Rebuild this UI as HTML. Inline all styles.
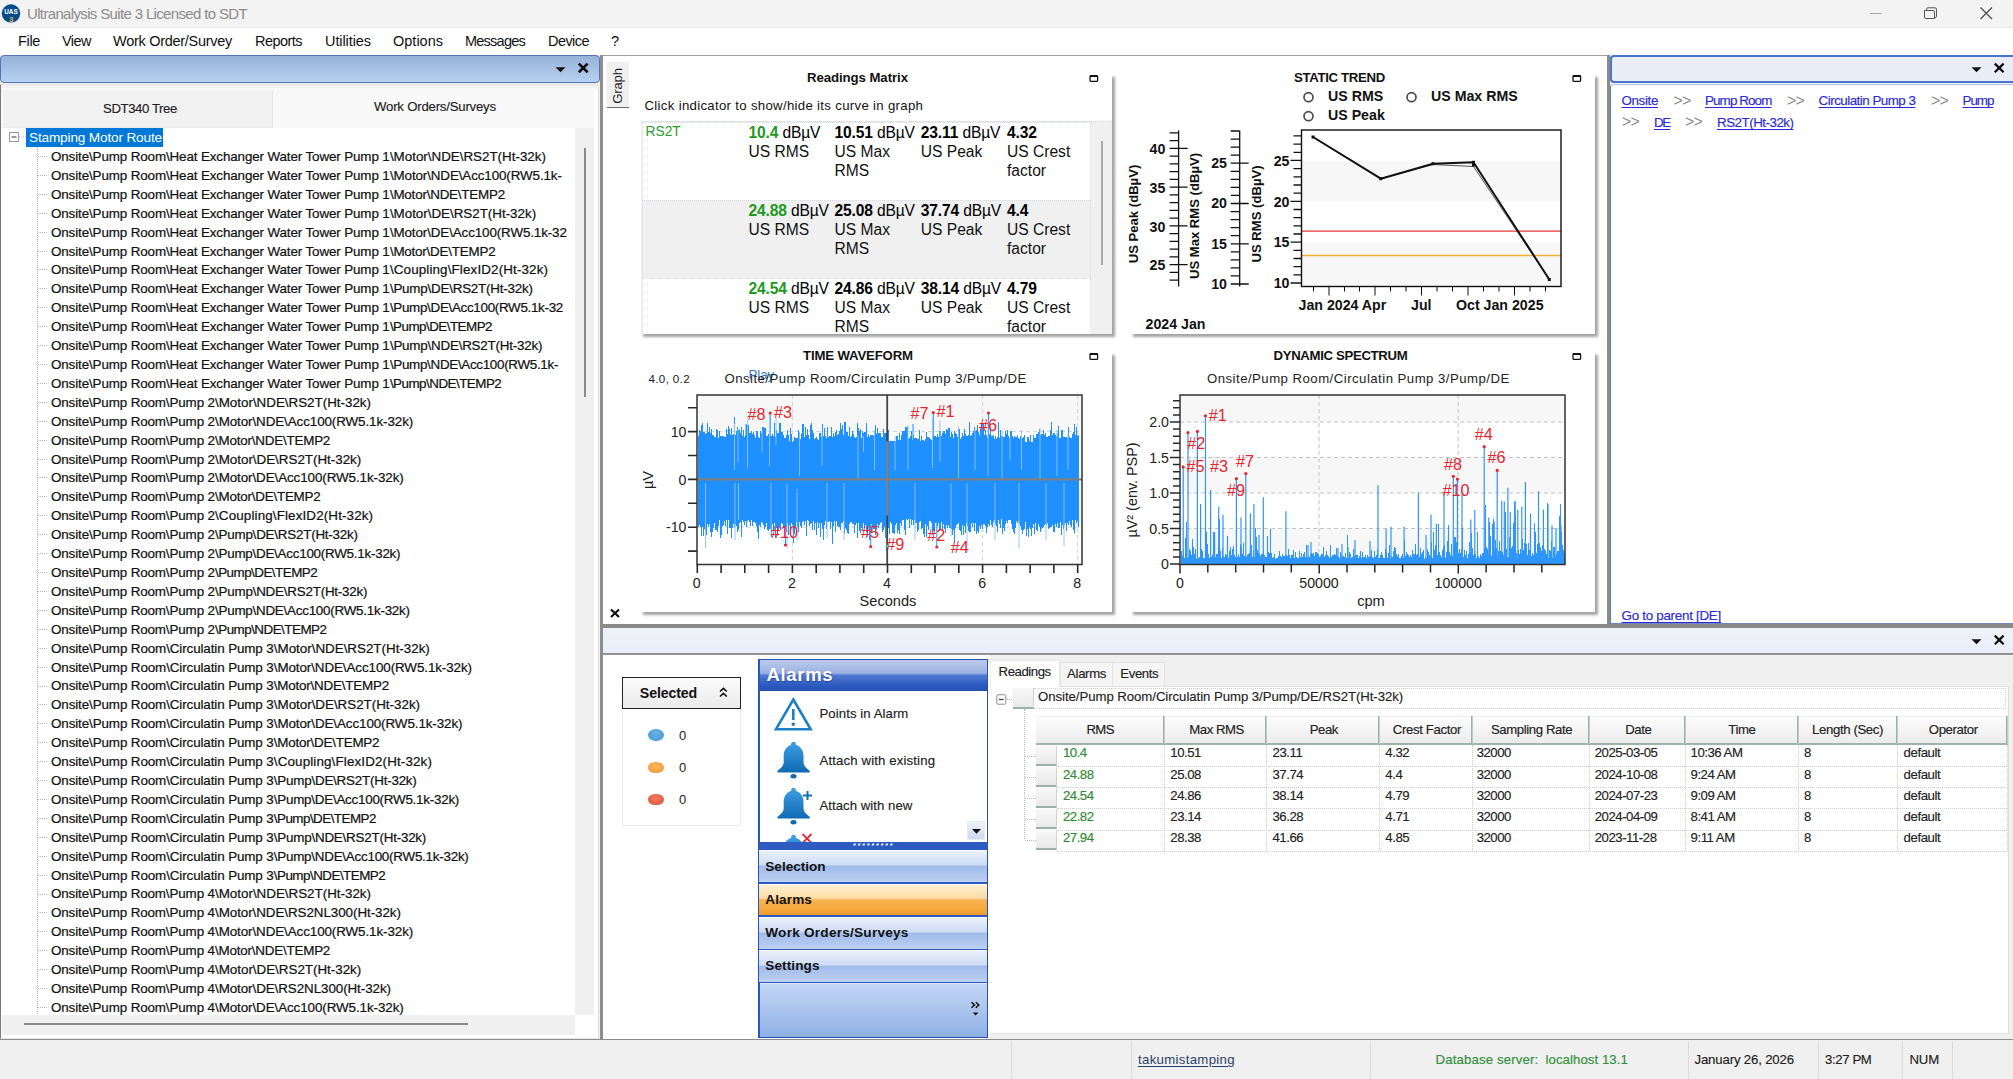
<!DOCTYPE html>
<html><head><meta charset="utf-8"><title>Ultranalysis Suite 3</title><style>
html,body{margin:0;padding:0;background:#f0f0f0;overflow:hidden}
body{width:2013px;height:1079px;position:relative;font-family:"Liberation Sans",sans-serif;color:#000}
.t{position:absolute;white-space:pre;line-height:1}
.r{position:absolute;box-sizing:border-box}
svg{overflow:visible}
.tr{-webkit-text-stroke-width:0.22px}
.ts{-webkit-text-stroke-width:0.15px}
</style></head><body>
<!-- p1_frame -->
<div class="r" style="left:0.00px;top:0.00px;width:2013.00px;height:28.00px;background:#f3f3f3;border-bottom:1px solid #e9e9e9"></div>
<svg class="r" style="left:0;top:0" width="24" height="28" viewBox="0 0 24 28"><circle cx="11" cy="13.4" r="9.9" fill="#e4edf6"/><circle cx="11" cy="13.4" r="9.2" fill="#064c8c"/><text x="11" y="14.3" font-family="Liberation Sans" font-weight="bold" font-size="7.6" fill="#fff" text-anchor="middle" textLength="13.6" lengthAdjust="spacingAndGlyphs">UAS</text><text x="11.3" y="22" font-family="Liberation Sans" font-weight="bold" font-size="8" fill="#d9b84a" text-anchor="middle">3</text></svg>
<span class="t " style="left:27.00px;top:5.90px;font-size:15.00px;letter-spacing:-0.651px;color:#8b8b8b;">Ultranalysis Suite 3 Licensed to SDT</span>
<svg class="r" style="left:1860px;top:0" width="153" height="28" viewBox="0 0 153 28"><path d="M10 13.5H21.5" stroke="#a8a8a8" stroke-width="1" fill="none"/><path d="M64.5 10.5h8.5a1.5 1.5 0 0 1 1.5 1.5v6.5h-8.5a1.5 1.5 0 0 1-1.5-1.5z M66.5 10.3v-1a1.5 1.5 0 0 1 1.5-1.5h7a1.5 1.5 0 0 1 1.5 1.5v7a1.5 1.5 0 0 1-1.5 1.5h-.5" stroke="#555" stroke-width="1" fill="none"/><path d="M120.5 7.5L132 19 M132 7.5L120.5 19" stroke="#444" stroke-width="1.1" fill="none"/></svg>
<div class="r" style="left:0.00px;top:28.00px;width:2013.00px;height:27.00px;background:#fff;"></div>
<span class="t " style="left:18.00px;top:34.03px;font-size:14.50px;letter-spacing:-0.341px;color:#111;">File</span>
<span class="t " style="left:62.00px;top:34.03px;font-size:14.50px;letter-spacing:-0.542px;color:#111;">View</span>
<span class="t " style="left:113.00px;top:34.03px;font-size:14.50px;letter-spacing:-0.284px;color:#111;">Work Order/Survey</span>
<span class="t " style="left:255.00px;top:34.03px;font-size:14.50px;letter-spacing:-0.539px;color:#111;">Reports</span>
<span class="t " style="left:325.00px;top:34.03px;font-size:14.50px;letter-spacing:-0.081px;color:#111;">Utilities</span>
<span class="t " style="left:393.00px;top:34.03px;font-size:14.50px;letter-spacing:0.004px;color:#111;">Options</span>
<span class="t " style="left:465.00px;top:34.03px;font-size:14.50px;letter-spacing:-0.761px;color:#111;">Messages</span>
<span class="t " style="left:548.00px;top:34.03px;font-size:14.50px;letter-spacing:-0.554px;color:#111;">Device</span>
<span class="t " style="left:611.00px;top:34.03px;font-size:14.50px;color:#111;">?</span>
<div class="r" style="left:0.00px;top:55.00px;width:2013.00px;height:985.00px;background:#f0f0f0;"></div>
<div class="r" style="left:0.00px;top:55.00px;width:599.50px;height:28.00px;background:linear-gradient(#98b3d8,#a7c1e3 50%,#b7d1f1);border:1.6px solid #5572b4;border-left-width:1px;border-radius:4px;box-sizing:border-box;"></div>
<svg class="r" style="left:550px;top:60px" width="45" height="18" viewBox="0 0 45 18"><path d="M5.5 7.3h10l-5 5z" fill="#111"/><path d="M28.8 3.6L37.6 12.2 M37.6 3.6L28.8 12.2" stroke="#111" stroke-width="2.7" fill="none"/></svg>
<div class="r" style="left:0.00px;top:84.00px;width:599.00px;height:955.00px;background:#fff;border:1px solid #e4e4e4;border-left:1px solid #7a7a7a;border-right:1px solid #dedede;box-sizing:border-box;border-radius:0 4px 0 0"></div>
<div class="r" style="left:1.00px;top:84.50px;width:596.00px;height:4.00px;background:#f0f0ee;"></div>
<div class="r" style="left:1.00px;top:88.30px;width:593.00px;height:40.00px;background:#f9f9f9;"></div>
<div class="r" style="left:3.00px;top:89.80px;width:270.30px;height:37.80px;background:#f2f2f2;border-right:1px solid #e8e8e8;border-bottom:1px solid #e8e8e8"></div>
<span class="t ts" style="left:103.00px;top:102.43px;font-size:13.20px;letter-spacing:-0.410px;color:#222;">SDT340 Tree</span>
<span class="t ts" style="left:374.00px;top:100.23px;font-size:13.20px;letter-spacing:-0.206px;color:#222;">Work Orders/Surveys</span>
<div class="r" style="left:575.00px;top:128.00px;width:19.00px;height:887.00px;background:#f0f0f0;"></div>
<div class="r" style="left:583.50px;top:148.00px;width:2.00px;height:249.00px;background:#8a8a8a;"></div>
<div class="r" style="left:2.00px;top:1015.00px;width:573.00px;height:20.00px;background:#f0f0f0;"></div>
<div class="r" style="left:575.00px;top:1015.00px;width:19.00px;height:20.00px;background:#fff;"></div>
<div class="r" style="left:24.00px;top:1022.50px;width:444.00px;height:2.00px;background:#8a8a8a;"></div>
<svg class="r" style="left:8px;top:131px" width="20" height="14" viewBox="0 0 20 14"><rect x="1.5" y="1.5" width="9" height="9" fill="#fff" stroke="#9a9a9a"/><path d="M3.5 6h5" stroke="#555" stroke-width="1.2"/><path d="M11 6h7" stroke="#b0b0b0" stroke-dasharray="1 1"/></svg>
<div class="r" style="left:26.00px;top:128.00px;width:137.00px;height:19.00px;background:#0078d7;"></div>
<span class="t " style="left:29.00px;top:130.79px;font-size:13.60px;letter-spacing:-0.154px;color:#fff;">Stamping Motor Route</span>
<div class="r" style="left:37.00px;top:147.00px;width:1.00px;height:867.00px;border-left:1px dotted #b5b5b5"></div>
<div class="r" style="left:38.00px;top:156.00px;width:9.00px;height:1.00px;border-top:1px dotted #b5b5b5"></div>
<span class="t tr" style="left:51.00px;top:149.96px;font-size:13.40px;letter-spacing:-0.119px;color:#111;">Onsite\Pump Room\Heat Exchanger Water Tower Pump 1</span>
<span class="t tr" style="left:389.90px;top:149.96px;font-size:13.40px;letter-spacing:-0.011px;color:#111;">\Motor\NDE\RS2T(Ht-32k)</span>
<div class="r" style="left:38.00px;top:174.91px;width:9.00px;height:1.00px;border-top:1px dotted #b5b5b5"></div>
<span class="t tr" style="left:51.00px;top:168.87px;font-size:13.40px;letter-spacing:-0.119px;color:#111;">Onsite\Pump Room\Heat Exchanger Water Tower Pump 1</span>
<span class="t tr" style="left:389.90px;top:168.87px;font-size:13.40px;letter-spacing:-0.110px;color:#111;">\Motor\NDE\Acc100(RW5.1k-</span>
<div class="r" style="left:38.00px;top:193.82px;width:9.00px;height:1.00px;border-top:1px dotted #b5b5b5"></div>
<span class="t tr" style="left:51.00px;top:187.78px;font-size:13.40px;letter-spacing:-0.119px;color:#111;">Onsite\Pump Room\Heat Exchanger Water Tower Pump 1</span>
<span class="t tr" style="left:389.90px;top:187.78px;font-size:13.40px;letter-spacing:-0.200px;color:#111;">\Motor\NDE\TEMP2</span>
<div class="r" style="left:38.00px;top:212.73px;width:9.00px;height:1.00px;border-top:1px dotted #b5b5b5"></div>
<span class="t tr" style="left:51.00px;top:206.69px;font-size:13.40px;letter-spacing:-0.119px;color:#111;">Onsite\Pump Room\Heat Exchanger Water Tower Pump 1</span>
<span class="t tr" style="left:389.90px;top:206.69px;font-size:13.40px;letter-spacing:-0.017px;color:#111;">\Motor\DE\RS2T(Ht-32k)</span>
<div class="r" style="left:38.00px;top:231.64px;width:9.00px;height:1.00px;border-top:1px dotted #b5b5b5"></div>
<span class="t tr" style="left:51.00px;top:225.60px;font-size:13.40px;letter-spacing:-0.119px;color:#111;">Onsite\Pump Room\Heat Exchanger Water Tower Pump 1</span>
<span class="t tr" style="left:389.90px;top:225.60px;font-size:13.40px;letter-spacing:-0.114px;color:#111;">\Motor\DE\Acc100(RW5.1k-32</span>
<div class="r" style="left:38.00px;top:250.56px;width:9.00px;height:1.00px;border-top:1px dotted #b5b5b5"></div>
<span class="t tr" style="left:51.00px;top:244.51px;font-size:13.40px;letter-spacing:-0.119px;color:#111;">Onsite\Pump Room\Heat Exchanger Water Tower Pump 1</span>
<span class="t tr" style="left:389.90px;top:244.51px;font-size:13.40px;letter-spacing:-0.208px;color:#111;">\Motor\DE\TEMP2</span>
<div class="r" style="left:38.00px;top:269.47px;width:9.00px;height:1.00px;border-top:1px dotted #b5b5b5"></div>
<span class="t tr" style="left:51.00px;top:263.42px;font-size:13.40px;letter-spacing:-0.119px;color:#111;">Onsite\Pump Room\Heat Exchanger Water Tower Pump 1</span>
<span class="t tr" style="left:389.90px;top:263.42px;font-size:13.40px;letter-spacing:0.136px;color:#111;">\Coupling\FlexID2(Ht-32k)</span>
<div class="r" style="left:38.00px;top:288.38px;width:9.00px;height:1.00px;border-top:1px dotted #b5b5b5"></div>
<span class="t tr" style="left:51.00px;top:282.33px;font-size:13.40px;letter-spacing:-0.119px;color:#111;">Onsite\Pump Room\Heat Exchanger Water Tower Pump 1</span>
<span class="t tr" style="left:389.90px;top:282.33px;font-size:13.40px;letter-spacing:-0.216px;color:#111;">\Pump\DE\RS2T(Ht-32k)</span>
<div class="r" style="left:38.00px;top:307.29px;width:9.00px;height:1.00px;border-top:1px dotted #b5b5b5"></div>
<span class="t tr" style="left:51.00px;top:301.24px;font-size:13.40px;letter-spacing:-0.119px;color:#111;">Onsite\Pump Room\Heat Exchanger Water Tower Pump 1</span>
<span class="t tr" style="left:389.90px;top:301.24px;font-size:13.40px;letter-spacing:-0.301px;color:#111;">\Pump\DE\Acc100(RW5.1k-32</span>
<div class="r" style="left:38.00px;top:326.20px;width:9.00px;height:1.00px;border-top:1px dotted #b5b5b5"></div>
<span class="t tr" style="left:51.00px;top:320.16px;font-size:13.40px;letter-spacing:-0.119px;color:#111;">Onsite\Pump Room\Heat Exchanger Water Tower Pump 1</span>
<span class="t tr" style="left:389.90px;top:320.16px;font-size:13.40px;letter-spacing:-0.519px;color:#111;">\Pump\DE\TEMP2</span>
<div class="r" style="left:38.00px;top:345.11px;width:9.00px;height:1.00px;border-top:1px dotted #b5b5b5"></div>
<span class="t tr" style="left:51.00px;top:339.07px;font-size:13.40px;letter-spacing:-0.119px;color:#111;">Onsite\Pump Room\Heat Exchanger Water Tower Pump 1</span>
<span class="t tr" style="left:389.90px;top:339.07px;font-size:13.40px;letter-spacing:-0.214px;color:#111;">\Pump\NDE\RS2T(Ht-32k)</span>
<div class="r" style="left:38.00px;top:364.02px;width:9.00px;height:1.00px;border-top:1px dotted #b5b5b5"></div>
<span class="t tr" style="left:51.00px;top:357.98px;font-size:13.40px;letter-spacing:-0.119px;color:#111;">Onsite\Pump Room\Heat Exchanger Water Tower Pump 1</span>
<span class="t tr" style="left:389.90px;top:357.98px;font-size:13.40px;letter-spacing:-0.300px;color:#111;">\Pump\NDE\Acc100(RW5.1k-</span>
<div class="r" style="left:38.00px;top:382.93px;width:9.00px;height:1.00px;border-top:1px dotted #b5b5b5"></div>
<span class="t tr" style="left:51.00px;top:376.89px;font-size:13.40px;letter-spacing:-0.119px;color:#111;">Onsite\Pump Room\Heat Exchanger Water Tower Pump 1</span>
<span class="t tr" style="left:389.90px;top:376.89px;font-size:13.40px;letter-spacing:-0.510px;color:#111;">\Pump\NDE\TEMP2</span>
<div class="r" style="left:38.00px;top:401.84px;width:9.00px;height:1.00px;border-top:1px dotted #b5b5b5"></div>
<span class="t tr" style="left:51.00px;top:395.80px;font-size:13.40px;letter-spacing:-0.123px;color:#111;">Onsite\Pump Room\Pump 2</span>
<span class="t tr" style="left:215.00px;top:395.80px;font-size:13.40px;letter-spacing:-0.011px;color:#111;">\Motor\NDE\RS2T(Ht-32k)</span>
<div class="r" style="left:38.00px;top:420.75px;width:9.00px;height:1.00px;border-top:1px dotted #b5b5b5"></div>
<span class="t tr" style="left:51.00px;top:414.71px;font-size:13.40px;letter-spacing:-0.123px;color:#111;">Onsite\Pump Room\Pump 2</span>
<span class="t tr" style="left:215.00px;top:414.71px;font-size:13.40px;letter-spacing:-0.087px;color:#111;">\Motor\NDE\Acc100(RW5.1k-32k)</span>
<div class="r" style="left:38.00px;top:439.67px;width:9.00px;height:1.00px;border-top:1px dotted #b5b5b5"></div>
<span class="t tr" style="left:51.00px;top:433.62px;font-size:13.40px;letter-spacing:-0.123px;color:#111;">Onsite\Pump Room\Pump 2</span>
<span class="t tr" style="left:215.00px;top:433.62px;font-size:13.40px;letter-spacing:-0.200px;color:#111;">\Motor\NDE\TEMP2</span>
<div class="r" style="left:38.00px;top:458.58px;width:9.00px;height:1.00px;border-top:1px dotted #b5b5b5"></div>
<span class="t tr" style="left:51.00px;top:452.53px;font-size:13.40px;letter-spacing:-0.123px;color:#111;">Onsite\Pump Room\Pump 2</span>
<span class="t tr" style="left:215.00px;top:452.53px;font-size:13.40px;letter-spacing:-0.017px;color:#111;">\Motor\DE\RS2T(Ht-32k)</span>
<div class="r" style="left:38.00px;top:477.49px;width:9.00px;height:1.00px;border-top:1px dotted #b5b5b5"></div>
<span class="t tr" style="left:51.00px;top:471.44px;font-size:13.40px;letter-spacing:-0.123px;color:#111;">Onsite\Pump Room\Pump 2</span>
<span class="t tr" style="left:215.00px;top:471.44px;font-size:13.40px;letter-spacing:-0.084px;color:#111;">\Motor\DE\Acc100(RW5.1k-32k)</span>
<div class="r" style="left:38.00px;top:496.40px;width:9.00px;height:1.00px;border-top:1px dotted #b5b5b5"></div>
<span class="t tr" style="left:51.00px;top:490.35px;font-size:13.40px;letter-spacing:-0.123px;color:#111;">Onsite\Pump Room\Pump 2</span>
<span class="t tr" style="left:215.00px;top:490.35px;font-size:13.40px;letter-spacing:-0.208px;color:#111;">\Motor\DE\TEMP2</span>
<div class="r" style="left:38.00px;top:515.31px;width:9.00px;height:1.00px;border-top:1px dotted #b5b5b5"></div>
<span class="t tr" style="left:51.00px;top:509.27px;font-size:13.40px;letter-spacing:-0.123px;color:#111;">Onsite\Pump Room\Pump 2</span>
<span class="t tr" style="left:215.00px;top:509.27px;font-size:13.40px;letter-spacing:0.136px;color:#111;">\Coupling\FlexID2(Ht-32k)</span>
<div class="r" style="left:38.00px;top:534.22px;width:9.00px;height:1.00px;border-top:1px dotted #b5b5b5"></div>
<span class="t tr" style="left:51.00px;top:528.18px;font-size:13.40px;letter-spacing:-0.123px;color:#111;">Onsite\Pump Room\Pump 2</span>
<span class="t tr" style="left:215.00px;top:528.18px;font-size:13.40px;letter-spacing:-0.216px;color:#111;">\Pump\DE\RS2T(Ht-32k)</span>
<div class="r" style="left:38.00px;top:553.13px;width:9.00px;height:1.00px;border-top:1px dotted #b5b5b5"></div>
<span class="t tr" style="left:51.00px;top:547.09px;font-size:13.40px;letter-spacing:-0.123px;color:#111;">Onsite\Pump Room\Pump 2</span>
<span class="t tr" style="left:215.00px;top:547.09px;font-size:13.40px;letter-spacing:-0.240px;color:#111;">\Pump\DE\Acc100(RW5.1k-32k)</span>
<div class="r" style="left:38.00px;top:572.04px;width:9.00px;height:1.00px;border-top:1px dotted #b5b5b5"></div>
<span class="t tr" style="left:51.00px;top:566.00px;font-size:13.40px;letter-spacing:-0.123px;color:#111;">Onsite\Pump Room\Pump 2</span>
<span class="t tr" style="left:215.00px;top:566.00px;font-size:13.40px;letter-spacing:-0.519px;color:#111;">\Pump\DE\TEMP2</span>
<div class="r" style="left:38.00px;top:590.95px;width:9.00px;height:1.00px;border-top:1px dotted #b5b5b5"></div>
<span class="t tr" style="left:51.00px;top:584.91px;font-size:13.40px;letter-spacing:-0.123px;color:#111;">Onsite\Pump Room\Pump 2</span>
<span class="t tr" style="left:215.00px;top:584.91px;font-size:13.40px;letter-spacing:-0.214px;color:#111;">\Pump\NDE\RS2T(Ht-32k)</span>
<div class="r" style="left:38.00px;top:609.86px;width:9.00px;height:1.00px;border-top:1px dotted #b5b5b5"></div>
<span class="t tr" style="left:51.00px;top:603.82px;font-size:13.40px;letter-spacing:-0.123px;color:#111;">Onsite\Pump Room\Pump 2</span>
<span class="t tr" style="left:215.00px;top:603.82px;font-size:13.40px;letter-spacing:-0.238px;color:#111;">\Pump\NDE\Acc100(RW5.1k-32k)</span>
<div class="r" style="left:38.00px;top:628.78px;width:9.00px;height:1.00px;border-top:1px dotted #b5b5b5"></div>
<span class="t tr" style="left:51.00px;top:622.73px;font-size:13.40px;letter-spacing:-0.123px;color:#111;">Onsite\Pump Room\Pump 2</span>
<span class="t tr" style="left:215.00px;top:622.73px;font-size:13.40px;letter-spacing:-0.510px;color:#111;">\Pump\NDE\TEMP2</span>
<div class="r" style="left:38.00px;top:647.69px;width:9.00px;height:1.00px;border-top:1px dotted #b5b5b5"></div>
<span class="t tr" style="left:51.00px;top:641.64px;font-size:13.40px;letter-spacing:-0.106px;color:#111;">Onsite\Pump Room\Circulatin Pump 3</span>
<span class="t tr" style="left:273.80px;top:641.64px;font-size:13.40px;letter-spacing:-0.011px;color:#111;">\Motor\NDE\RS2T(Ht-32k)</span>
<div class="r" style="left:38.00px;top:666.60px;width:9.00px;height:1.00px;border-top:1px dotted #b5b5b5"></div>
<span class="t tr" style="left:51.00px;top:660.55px;font-size:13.40px;letter-spacing:-0.106px;color:#111;">Onsite\Pump Room\Circulatin Pump 3</span>
<span class="t tr" style="left:273.80px;top:660.55px;font-size:13.40px;letter-spacing:-0.087px;color:#111;">\Motor\NDE\Acc100(RW5.1k-32k)</span>
<div class="r" style="left:38.00px;top:685.51px;width:9.00px;height:1.00px;border-top:1px dotted #b5b5b5"></div>
<span class="t tr" style="left:51.00px;top:679.46px;font-size:13.40px;letter-spacing:-0.106px;color:#111;">Onsite\Pump Room\Circulatin Pump 3</span>
<span class="t tr" style="left:273.80px;top:679.46px;font-size:13.40px;letter-spacing:-0.200px;color:#111;">\Motor\NDE\TEMP2</span>
<div class="r" style="left:38.00px;top:704.42px;width:9.00px;height:1.00px;border-top:1px dotted #b5b5b5"></div>
<span class="t tr" style="left:51.00px;top:698.38px;font-size:13.40px;letter-spacing:-0.106px;color:#111;">Onsite\Pump Room\Circulatin Pump 3</span>
<span class="t tr" style="left:273.80px;top:698.38px;font-size:13.40px;letter-spacing:-0.017px;color:#111;">\Motor\DE\RS2T(Ht-32k)</span>
<div class="r" style="left:38.00px;top:723.33px;width:9.00px;height:1.00px;border-top:1px dotted #b5b5b5"></div>
<span class="t tr" style="left:51.00px;top:717.29px;font-size:13.40px;letter-spacing:-0.106px;color:#111;">Onsite\Pump Room\Circulatin Pump 3</span>
<span class="t tr" style="left:273.80px;top:717.29px;font-size:13.40px;letter-spacing:-0.084px;color:#111;">\Motor\DE\Acc100(RW5.1k-32k)</span>
<div class="r" style="left:38.00px;top:742.24px;width:9.00px;height:1.00px;border-top:1px dotted #b5b5b5"></div>
<span class="t tr" style="left:51.00px;top:736.20px;font-size:13.40px;letter-spacing:-0.106px;color:#111;">Onsite\Pump Room\Circulatin Pump 3</span>
<span class="t tr" style="left:273.80px;top:736.20px;font-size:13.40px;letter-spacing:-0.208px;color:#111;">\Motor\DE\TEMP2</span>
<div class="r" style="left:38.00px;top:761.15px;width:9.00px;height:1.00px;border-top:1px dotted #b5b5b5"></div>
<span class="t tr" style="left:51.00px;top:755.11px;font-size:13.40px;letter-spacing:-0.106px;color:#111;">Onsite\Pump Room\Circulatin Pump 3</span>
<span class="t tr" style="left:273.80px;top:755.11px;font-size:13.40px;letter-spacing:0.136px;color:#111;">\Coupling\FlexID2(Ht-32k)</span>
<div class="r" style="left:38.00px;top:780.06px;width:9.00px;height:1.00px;border-top:1px dotted #b5b5b5"></div>
<span class="t tr" style="left:51.00px;top:774.02px;font-size:13.40px;letter-spacing:-0.106px;color:#111;">Onsite\Pump Room\Circulatin Pump 3</span>
<span class="t tr" style="left:273.80px;top:774.02px;font-size:13.40px;letter-spacing:-0.216px;color:#111;">\Pump\DE\RS2T(Ht-32k)</span>
<div class="r" style="left:38.00px;top:798.97px;width:9.00px;height:1.00px;border-top:1px dotted #b5b5b5"></div>
<span class="t tr" style="left:51.00px;top:792.93px;font-size:13.40px;letter-spacing:-0.106px;color:#111;">Onsite\Pump Room\Circulatin Pump 3</span>
<span class="t tr" style="left:273.80px;top:792.93px;font-size:13.40px;letter-spacing:-0.240px;color:#111;">\Pump\DE\Acc100(RW5.1k-32k)</span>
<div class="r" style="left:38.00px;top:817.88px;width:9.00px;height:1.00px;border-top:1px dotted #b5b5b5"></div>
<span class="t tr" style="left:51.00px;top:811.84px;font-size:13.40px;letter-spacing:-0.106px;color:#111;">Onsite\Pump Room\Circulatin Pump 3</span>
<span class="t tr" style="left:273.80px;top:811.84px;font-size:13.40px;letter-spacing:-0.519px;color:#111;">\Pump\DE\TEMP2</span>
<div class="r" style="left:38.00px;top:836.80px;width:9.00px;height:1.00px;border-top:1px dotted #b5b5b5"></div>
<span class="t tr" style="left:51.00px;top:830.75px;font-size:13.40px;letter-spacing:-0.106px;color:#111;">Onsite\Pump Room\Circulatin Pump 3</span>
<span class="t tr" style="left:273.80px;top:830.75px;font-size:13.40px;letter-spacing:-0.214px;color:#111;">\Pump\NDE\RS2T(Ht-32k)</span>
<div class="r" style="left:38.00px;top:855.71px;width:9.00px;height:1.00px;border-top:1px dotted #b5b5b5"></div>
<span class="t tr" style="left:51.00px;top:849.66px;font-size:13.40px;letter-spacing:-0.106px;color:#111;">Onsite\Pump Room\Circulatin Pump 3</span>
<span class="t tr" style="left:273.80px;top:849.66px;font-size:13.40px;letter-spacing:-0.238px;color:#111;">\Pump\NDE\Acc100(RW5.1k-32k)</span>
<div class="r" style="left:38.00px;top:874.62px;width:9.00px;height:1.00px;border-top:1px dotted #b5b5b5"></div>
<span class="t tr" style="left:51.00px;top:868.57px;font-size:13.40px;letter-spacing:-0.106px;color:#111;">Onsite\Pump Room\Circulatin Pump 3</span>
<span class="t tr" style="left:273.80px;top:868.57px;font-size:13.40px;letter-spacing:-0.510px;color:#111;">\Pump\NDE\TEMP2</span>
<div class="r" style="left:38.00px;top:893.53px;width:9.00px;height:1.00px;border-top:1px dotted #b5b5b5"></div>
<span class="t tr" style="left:51.00px;top:887.49px;font-size:13.40px;letter-spacing:-0.123px;color:#111;">Onsite\Pump Room\Pump 4</span>
<span class="t tr" style="left:215.00px;top:887.49px;font-size:13.40px;letter-spacing:-0.011px;color:#111;">\Motor\NDE\RS2T(Ht-32k)</span>
<div class="r" style="left:38.00px;top:912.44px;width:9.00px;height:1.00px;border-top:1px dotted #b5b5b5"></div>
<span class="t tr" style="left:51.00px;top:906.40px;font-size:13.40px;letter-spacing:-0.123px;color:#111;">Onsite\Pump Room\Pump 4</span>
<span class="t tr" style="left:215.00px;top:906.40px;font-size:13.40px;letter-spacing:-0.062px;color:#111;">\Motor\NDE\RS2NL300(Ht-32k)</span>
<div class="r" style="left:38.00px;top:931.35px;width:9.00px;height:1.00px;border-top:1px dotted #b5b5b5"></div>
<span class="t tr" style="left:51.00px;top:925.31px;font-size:13.40px;letter-spacing:-0.123px;color:#111;">Onsite\Pump Room\Pump 4</span>
<span class="t tr" style="left:215.00px;top:925.31px;font-size:13.40px;letter-spacing:-0.087px;color:#111;">\Motor\NDE\Acc100(RW5.1k-32k)</span>
<div class="r" style="left:38.00px;top:950.26px;width:9.00px;height:1.00px;border-top:1px dotted #b5b5b5"></div>
<span class="t tr" style="left:51.00px;top:944.22px;font-size:13.40px;letter-spacing:-0.123px;color:#111;">Onsite\Pump Room\Pump 4</span>
<span class="t tr" style="left:215.00px;top:944.22px;font-size:13.40px;letter-spacing:-0.200px;color:#111;">\Motor\NDE\TEMP2</span>
<div class="r" style="left:38.00px;top:969.17px;width:9.00px;height:1.00px;border-top:1px dotted #b5b5b5"></div>
<span class="t tr" style="left:51.00px;top:963.13px;font-size:13.40px;letter-spacing:-0.123px;color:#111;">Onsite\Pump Room\Pump 4</span>
<span class="t tr" style="left:215.00px;top:963.13px;font-size:13.40px;letter-spacing:-0.017px;color:#111;">\Motor\DE\RS2T(Ht-32k)</span>
<div class="r" style="left:38.00px;top:988.08px;width:9.00px;height:1.00px;border-top:1px dotted #b5b5b5"></div>
<span class="t tr" style="left:51.00px;top:982.04px;font-size:13.40px;letter-spacing:-0.123px;color:#111;">Onsite\Pump Room\Pump 4</span>
<span class="t tr" style="left:215.00px;top:982.04px;font-size:13.40px;letter-spacing:-0.076px;color:#111;">\Motor\DE\RS2NL300(Ht-32k)</span>
<div class="r" style="left:38.00px;top:1007.00px;width:9.00px;height:1.00px;border-top:1px dotted #b5b5b5"></div>
<span class="t tr" style="left:51.00px;top:1000.95px;font-size:13.40px;letter-spacing:-0.123px;color:#111;">Onsite\Pump Room\Pump 4</span>
<span class="t tr" style="left:215.00px;top:1000.95px;font-size:13.40px;letter-spacing:-0.084px;color:#111;">\Motor\DE\Acc100(RW5.1k-32k)</span>
<!-- p2_center -->
<div class="r" style="left:602.00px;top:55.00px;width:1006.00px;height:571.50px;background:#fff;border-top:1px solid #a0a0a0;"></div>
<div class="r" style="left:599.70px;top:55.00px;width:3.00px;height:984.00px;background:#8e8e8e;"></div>
<div class="r" style="left:607.00px;top:62.00px;width:22.00px;height:45.50px;background:#f0f0f0;border-bottom:1.5px solid #6a6a6a"></div>
<span class="t" style="left:618px;top:86px;font-size:13.2px;color:#222;transform:translate(-50%,-50%) rotate(-90deg);letter-spacing:-0.2px">Graph</span>
<svg class="r" style="left:609px;top:607px" width="12" height="12" viewBox="0 0 12 12"><path d="M2 2.5L10 10 M10 2.5L2 10" stroke="#111" stroke-width="2.2"/></svg>
<div class="r" style="left:640.00px;top:74.00px;width:472.00px;height:260.00px;background:#fff;box-shadow:2.5px 2.5px 2.5px rgba(0,0,0,0.36);"></div>
<span class="t " style="left:807.00px;top:70.83px;font-size:13.20px;letter-spacing:-0.064px;font-weight:bold;color:#111;">Readings Matrix</span>
<svg class="r" style="left:1088.5px;top:73.8px" width="10" height="9" viewBox="0 0 10 9"><rect x="1" y="1.6" width="7.6" height="5.8" rx="1" fill="#fff" stroke="#111" stroke-width="1.3"/><path d="M1 2h7.6" stroke="#111" stroke-width="2"/></svg>
<span class="t " style="left:644.50px;top:98.83px;font-size:13.20px;letter-spacing:0.316px;color:#111;">Click indicator to show/hide its curve in graph</span>
<div class="r" style="left:641.00px;top:120.50px;width:471.00px;height:213.50px;background:#f0f0f0;border-top:1px dotted #cfd6e0"></div>
<div class="r" style="left:642.00px;top:121.50px;width:448.50px;height:78.00px;background:#fff;border-top:1px dotted #d5dbe4;border-left:1px dotted #d5dbe4;border-right:1px dotted #d5dbe4"></div>
<div class="r" style="left:642.00px;top:199.50px;width:448.50px;height:78.00px;background:#f0f0f0;border-top:1px dotted #d5dbe4;border-left:1px dotted #d5dbe4;border-right:1px dotted #d5dbe4"></div>
<div class="r" style="left:642.00px;top:277.50px;width:448.50px;height:56.50px;background:#fff;border-top:1px dotted #d5dbe4;border-left:1px dotted #d5dbe4;border-right:1px dotted #d5dbe4"></div>
<div class="r" style="left:1100.50px;top:141.00px;width:2.00px;height:124.00px;background:#a8a8a8;"></div>
<span class="t " style="left:645.50px;top:124.52px;font-size:13.80px;color:#2e9b2e;">RS2T</span>
<div class="r" style="left:640px;top:74px;width:472px;height:260px;overflow:hidden">
<span class="t" style="left:108.5px;top:50.89px;font-size:15.6px;letter-spacing:-0.15px"><b style="color:#1f9a1f">10.4</b> dBµV</span>
<span class="t" style="left:194.5px;top:50.89px;font-size:15.6px;letter-spacing:-0.15px"><b>10.51</b> dBµV</span>
<span class="t" style="left:280.8px;top:50.89px;font-size:15.6px;letter-spacing:-0.15px"><b>23.11</b> dBµV</span>
<span class="t" style="left:367.0px;top:50.89px;font-size:15.6px;letter-spacing:-0.15px"><b>4.32</b></span>
<span class="t " style="left:108.50px;top:69.89px;font-size:15.60px;color:#111;">US RMS</span>
<span class="t " style="left:194.50px;top:69.89px;font-size:15.60px;color:#111;">US Max</span>
<span class="t " style="left:194.50px;top:88.89px;font-size:15.60px;color:#111;">RMS</span>
<span class="t " style="left:280.80px;top:69.89px;font-size:15.60px;color:#111;">US Peak</span>
<span class="t " style="left:367.00px;top:69.89px;font-size:15.60px;color:#111;">US Crest</span>
<span class="t " style="left:367.00px;top:88.89px;font-size:15.60px;color:#111;">factor</span>
<span class="t" style="left:108.5px;top:128.89px;font-size:15.6px;letter-spacing:-0.15px"><b style="color:#1f9a1f">24.88</b> dBµV</span>
<span class="t" style="left:194.5px;top:128.89px;font-size:15.6px;letter-spacing:-0.15px"><b>25.08</b> dBµV</span>
<span class="t" style="left:280.8px;top:128.89px;font-size:15.6px;letter-spacing:-0.15px"><b>37.74</b> dBµV</span>
<span class="t" style="left:367.0px;top:128.89px;font-size:15.6px;letter-spacing:-0.15px"><b>4.4</b></span>
<span class="t " style="left:108.50px;top:147.89px;font-size:15.60px;color:#111;">US RMS</span>
<span class="t " style="left:194.50px;top:147.89px;font-size:15.60px;color:#111;">US Max</span>
<span class="t " style="left:194.50px;top:166.89px;font-size:15.60px;color:#111;">RMS</span>
<span class="t " style="left:280.80px;top:147.89px;font-size:15.60px;color:#111;">US Peak</span>
<span class="t " style="left:367.00px;top:147.89px;font-size:15.60px;color:#111;">US Crest</span>
<span class="t " style="left:367.00px;top:166.89px;font-size:15.60px;color:#111;">factor</span>
<span class="t" style="left:108.5px;top:206.89px;font-size:15.6px;letter-spacing:-0.15px"><b style="color:#1f9a1f">24.54</b> dBµV</span>
<span class="t" style="left:194.5px;top:206.89px;font-size:15.6px;letter-spacing:-0.15px"><b>24.86</b> dBµV</span>
<span class="t" style="left:280.8px;top:206.89px;font-size:15.6px;letter-spacing:-0.15px"><b>38.14</b> dBµV</span>
<span class="t" style="left:367.0px;top:206.89px;font-size:15.6px;letter-spacing:-0.15px"><b>4.79</b></span>
<span class="t " style="left:108.50px;top:225.89px;font-size:15.60px;color:#111;">US RMS</span>
<span class="t " style="left:194.50px;top:225.89px;font-size:15.60px;color:#111;">US Max</span>
<span class="t " style="left:194.50px;top:244.89px;font-size:15.60px;color:#111;">RMS</span>
<span class="t " style="left:280.80px;top:225.89px;font-size:15.60px;color:#111;">US Peak</span>
<span class="t " style="left:367.00px;top:225.89px;font-size:15.60px;color:#111;">US Crest</span>
<span class="t " style="left:367.00px;top:244.89px;font-size:15.60px;color:#111;">factor</span>
</div>
<div class="r" style="left:1130.00px;top:74.00px;width:465.00px;height:260.00px;background:#fff;box-shadow:2.5px 2.5px 2.5px rgba(0,0,0,0.36);"></div>
<span class="t " style="left:1294.00px;top:70.83px;font-size:13.20px;letter-spacing:-0.320px;font-weight:bold;color:#111;">STATIC TREND</span>
<svg class="r" style="left:1571.5px;top:73.8px" width="10" height="9" viewBox="0 0 10 9"><rect x="1" y="1.6" width="7.6" height="5.8" rx="1" fill="#fff" stroke="#111" stroke-width="1.3"/><path d="M1 2h7.6" stroke="#111" stroke-width="2"/></svg>
<svg class="r" style="left:0;top:0" width="2013" height="1079" viewBox="0 0 2013 1079" font-family="Liberation Sans" font-weight="bold"><circle cx="1308.5" cy="97.2" r="4.5" fill="#fff" stroke="#4a4a4a" stroke-width="1.7"/><circle cx="1411.5" cy="97.2" r="4.5" fill="#fff" stroke="#4a4a4a" stroke-width="1.7"/><circle cx="1308.5" cy="116.2" r="4.5" fill="#fff" stroke="#4a4a4a" stroke-width="1.7"/><text x="1328" y="101" font-size="14.2" fill="#111">US RMS</text><text x="1431" y="101" font-size="14.2" fill="#111">US Max RMS</text><text x="1328" y="120" font-size="14.2" fill="#111">US Peak</text><rect x="1301.5" y="160.6" width="259.5" height="40.9" fill="#f7f7f7"/><rect x="1301.5" y="242.4" width="259.5" height="43.6" fill="#f7f7f7"/><path d="M1301.5 231.2H1561.0" stroke="#e53935" stroke-width="1.3"/><path d="M1301.5 255.5H1561.0" stroke="#f0b030" stroke-width="1.3"/><rect x="1301.5" y="130.0" width="259.5" height="156.5" fill="none" stroke="#111" stroke-width="1.4"/><path d="M1313 137L1380.8 178.7L1433 164.5L1473.5 166.5L1549.3 279.5" stroke="#555" stroke-width="1" fill="none"/><path d="M1313 137L1380.8 178.7L1433 163.7L1473.5 162.3L1549.3 279.5" stroke="#111" stroke-width="2" fill="none" stroke-linejoin="round"/><rect x="1311.5" y="135.5" width="3" height="3" fill="#111"/><rect x="1379.3" y="177.2" width="3" height="3" fill="#111"/><rect x="1431.5" y="162.2" width="3" height="3" fill="#111"/><rect x="1472.0" y="160.8" width="3" height="3" fill="#111"/><rect x="1472.0" y="163.5" width="3" height="3" fill="#111"/><rect x="1547.8" y="278.0" width="3" height="3" fill="#111"/><path d="M1290.5 283.0H1301.5 M1293.5 274.8H1301.5 M1293.5 266.7H1301.5 M1293.5 258.5H1301.5 M1293.5 250.3H1301.5 M1290.5 242.2H1301.5 M1293.5 234.0H1301.5 M1293.5 225.8H1301.5 M1293.5 217.6H1301.5 M1293.5 209.5H1301.5 M1290.5 201.3H1301.5 M1293.5 193.1H1301.5 M1293.5 185.0H1301.5 M1293.5 176.8H1301.5 M1293.5 168.6H1301.5 M1290.5 160.4H1301.5 M1293.5 152.3H1301.5 M1293.5 144.1H1301.5 M1293.5 135.9H1301.5" stroke="#111" stroke-width="1.3"/><text x="1289.5" y="165.6" font-size="14.2" text-anchor="end" fill="#111">25</text><text x="1289.5" y="206.5" font-size="14.2" text-anchor="end" fill="#111">20</text><text x="1289.5" y="247.4" font-size="14.2" text-anchor="end" fill="#111">15</text><text x="1289.5" y="288.0" font-size="14.2" text-anchor="end" fill="#111">10</text><path d="M1239.7 130.5V286.5 M1230.7 284.0H1248.7 M1230.7 275.9H1239.7 M1230.7 267.9H1239.7 M1230.7 259.9H1239.7 M1230.7 251.8H1239.7 M1230.7 243.8H1248.7 M1230.7 235.7H1239.7 M1230.7 227.6H1239.7 M1230.7 219.6H1239.7 M1230.7 211.6H1239.7 M1230.7 203.5H1248.7 M1230.7 195.4H1239.7 M1230.7 187.4H1239.7 M1230.7 179.3H1239.7 M1230.7 171.3H1239.7 M1230.7 163.2H1248.7 M1230.7 155.2H1239.7 M1230.7 147.1H1239.7 M1230.7 139.1H1239.7 M1230.7 131.0H1239.7" stroke="#111" stroke-width="1.3" fill="none"/><text x="1227" y="168.3" font-size="14.2" text-anchor="end" fill="#111">25</text><text x="1227" y="208.3" font-size="14.2" text-anchor="end" fill="#111">20</text><text x="1227" y="249.0" font-size="14.2" text-anchor="end" fill="#111">15</text><text x="1227" y="289.0" font-size="14.2" text-anchor="end" fill="#111">10</text><path d="M1178.6 130.5V286.5 M1169.6 280.2H1178.6 M1169.6 272.4H1178.6 M1169.6 264.7H1187.6 M1169.6 256.9H1178.6 M1169.6 249.2H1178.6 M1169.6 241.4H1178.6 M1169.6 233.7H1178.6 M1169.6 225.9H1187.6 M1169.6 218.2H1178.6 M1169.6 210.4H1178.6 M1169.6 202.7H1178.6 M1169.6 194.9H1178.6 M1169.6 187.2H1187.6 M1169.6 179.4H1178.6 M1169.6 171.7H1178.6 M1169.6 163.9H1178.6 M1169.6 156.2H1178.6 M1169.6 148.4H1187.6 M1169.6 140.7H1178.6 M1169.6 132.9H1178.6" stroke="#111" stroke-width="1.3" fill="none"/><text x="1165.4" y="153.5" font-size="14.2" text-anchor="end" fill="#111">40</text><text x="1165.4" y="192.5" font-size="14.2" text-anchor="end" fill="#111">35</text><text x="1165.4" y="232.0" font-size="14.2" text-anchor="end" fill="#111">30</text><text x="1165.4" y="269.7" font-size="14.2" text-anchor="end" fill="#111">25</text><text transform="translate(1138.0 214.0) rotate(-90)" font-size="13.1" text-anchor="middle" fill="#111">US Peak (dBµV)</text><text transform="translate(1199.0 216.0) rotate(-90)" font-size="13.1" text-anchor="middle" fill="#111">US Max RMS (dBµV)</text><text transform="translate(1261.0 214.0) rotate(-90)" font-size="13.1" text-anchor="middle" fill="#111">US RMS (dBµV)</text><path d="M1313.5 286.5V291.5 M1329.0 286.5V295.5 M1344.5 286.5V291.5 M1359.5 286.5V291.5 M1375.0 286.5V295.5 M1390.5 286.5V291.5 M1406.0 286.5V291.5 M1421.5 286.5V295.5 M1437.0 286.5V291.5 M1452.5 286.5V291.5 M1468.0 286.5V295.5 M1483.5 286.5V291.5 M1499.0 286.5V291.5 M1514.5 286.5V295.5 M1530.0 286.5V291.5 M1545.5 286.5V291.5" stroke="#111" stroke-width="1"/><text x="1298.5" y="310" font-size="14.2" fill="#111">Jan 2024 Apr</text><text x="1411" y="310" font-size="14.2" fill="#111">Jul</text><text x="1456" y="310" font-size="14.2" fill="#111">Oct Jan 2025</text><text x="1145.5" y="329" font-size="14.2" fill="#111">2024 Jan</text></svg>
<div class="r" style="left:640.00px;top:352.00px;width:472.00px;height:260.00px;background:#fff;box-shadow:2.5px 2.5px 2.5px rgba(0,0,0,0.36);"></div>
<span class="t " style="left:803.00px;top:348.83px;font-size:13.20px;letter-spacing:-0.150px;font-weight:bold;color:#111;">TIME WAVEFORM</span>
<svg class="r" style="left:1088.5px;top:352.0px" width="10" height="9" viewBox="0 0 10 9"><rect x="1" y="1.6" width="7.6" height="5.8" rx="1" fill="#fff" stroke="#111" stroke-width="1.3"/><path d="M1 2h7.6" stroke="#111" stroke-width="2"/></svg>
<span class="t " style="left:748.50px;top:368.33px;font-size:13.20px;color:#3a78c9;">Play</span>
<span class="t " style="left:648.50px;top:373.18px;font-size:11.60px;letter-spacing:0.350px;color:#222;">4.0, 0.2</span>
<span class="t " style="left:724.50px;top:371.83px;font-size:13.20px;letter-spacing:0.460px;color:#222;">Onsite/Pump Room/Circulatin Pump 3/Pump/DE</span>
<svg class="r" style="left:0;top:0" width="2013" height="1079" viewBox="0 0 2013 1079" font-family="Liberation Sans"><rect x="697.0" y="395.0" width="385.0" height="36.6" fill="#f7f7f7"/><rect x="697.0" y="479.4" width="385.0" height="47.8" fill="#f7f7f7"/><path d="M792.4 395.0V564.5 M887.5 395.0V564.5 M982.6 395.0V564.5 M1077.7 395.0V564.5 M697.0 431.6H1082.0 M697.0 527.2H1082.0" stroke="#d2d2d2" stroke-width="1" stroke-dasharray="4 3" fill="none"/><path d="M697.8 479.4V435.7h1V429.5h1V430.6h1V424.6h1V423.0h1V432.0h1V432.0h1V433.7h1V433.0h1V422.5h1V431.8h1V427.1h1V433.4h1V428.7h1V435.1h1V435.1h1V436.7h1V436.7h1V429.1h1V429.6h1V438.2h1V431.4h1V435.5h1V435.8h1V435.8h1V435.8h1V436.7h1V437.4h1V429.0h1V433.7h1V425.9h1V428.8h1V434.8h1V427.6h1V435.3h1V434.4h1V417.4h1V434.7h1V430.8h1V426.7h1V429.9h1V429.8h1V433.1h1V426.8h1V435.9h1V430.0h1V437.4h1V434.5h1V424.9h1V424.9h1V424.9h1V433.4h1V432.5h1V430.9h1V433.7h1V432.4h1V435.2h1V437.9h1V431.0h1V431.0h1V436.7h1V437.8h1V430.8h1V433.3h1V427.1h1V427.3h1V427.9h1V427.9h1V436.2h1V436.2h1V433.7h1V433.7h1V436.2h1V436.2h1V434.4h1V435.8h1V428.6h1V436.8h1V429.6h1V432.6h1V432.6h1V423.4h1V423.4h1V431.7h1V431.7h1V435.1h1V437.6h1V437.6h1V435.2h1V430.4h1V435.0h1V440.6h1V427.6h1V434.2h1V441.9h1V440.6h1V436.9h1V438.1h1V438.4h1V437.9h1V429.5h1V432.2h1V438.9h1V433.9h1V424.4h1V424.4h1V437.4h1V426.7h1V435.0h1V429.0h1V435.4h1V438.6h1V424.7h1V423.0h1V430.2h1V433.0h1V438.8h1V437.6h1V437.0h1V438.9h1V439.6h1V433.0h1V433.0h1V437.0h1V424.1h1V436.3h1V428.2h1V436.4h1V437.5h1V427.1h1V437.4h1V436.2h1V436.2h1V427.4h1V436.8h1V433.3h1V436.2h1V431.9h1V429.5h1V435.3h1V434.2h1V431.3h1V422.7h1V429.3h1V424.5h1V435.4h1V422.0h1V422.0h1V432.0h1V432.0h1V436.3h1V427.4h1V437.4h1V436.3h1V431.2h1V434.2h1V437.1h1V438.0h1V437.0h1V423.2h1V427.7h1V431.1h1V428.9h1V438.2h1V431.4h1V433.0h1V431.5h1V431.5h1V423.1h1V436.6h1V433.5h1V436.7h1V434.9h1V434.9h1V434.9h1V435.6h1V432.2h1V424.7h1V434.1h1V428.4h1V432.8h1V432.8h1V432.8h1V436.6h1V436.6h1V428.7h1V433.4h1V433.4h1V433.4h1V437.1h1V430.4h1V440.6h1V440.6h1V440.6h1V440.8h1V440.8h1V440.6h1V440.6h1V436.1h1V436.1h1V439.9h1V432.8h1V440.0h1V434.5h1V430.7h1V431.1h1V431.1h1V426.9h1V426.9h1V426.9h1V438.8h1V437.8h1V435.7h1V431.3h1V439.5h1V435.2h1V438.2h1V438.2h1V437.6h1V439.0h1V439.0h1V430.4h1V441.1h1V435.6h1V439.7h1V439.7h1V441.1h1V439.4h1V432.4h1V437.1h1V437.1h1V437.9h1V438.9h1V440.2h1V440.2h1V436.6h1V435.6h1V436.3h1V437.2h1V433.9h1V436.5h1V431.0h1V431.0h1V436.3h1V433.3h1V431.0h1V431.0h1V434.1h1V429.1h1V429.6h1V428.0h1V428.0h1V436.9h1V431.6h1V434.0h1V437.7h1V430.7h1V432.5h1V434.0h1V437.0h1V428.6h1V429.0h1V438.6h1V436.9h1V432.6h1V436.1h1V428.6h1V433.7h1V435.7h1V435.7h1V435.4h1V421.8h1V436.3h1V435.4h1V432.6h1V430.7h1V426.8h1V430.6h1V429.7h1V425.4h1V431.5h1V434.6h1V428.7h1V423.0h1V423.0h1V423.0h1V434.6h1V429.7h1V434.5h1V437.8h1V438.2h1V433.9h1V426.0h1V436.0h1V436.0h1V434.5h1V438.8h1V436.2h1V438.7h1V437.1h1V422.2h1V438.0h1V429.7h1V435.7h1V436.3h1V436.7h1V436.7h1V430.7h1V434.2h1V429.9h1V435.5h1V437.7h1V430.8h1V430.8h1V435.8h1V438.3h1V435.9h1V437.2h1V437.2h1V434.5h1V437.6h1V438.6h1V435.8h1V439.0h1V437.6h1V437.2h1V434.7h1V442.0h1V442.0h1V436.8h1V436.8h1V441.3h1V435.0h1V442.3h1V441.6h1V434.8h1V437.6h1V437.6h1V433.9h1V433.9h1V431.9h1V429.3h1V435.4h1V434.3h1V434.3h1V429.7h1V434.7h1V433.2h1V437.2h1V437.2h1V435.5h1V435.5h1V430.3h1V422.4h1V435.4h1V433.1h1V433.1h1V435.2h1V436.0h1V433.2h1V425.7h1V438.4h1V438.4h1V429.5h1V429.5h1V436.9h1V436.9h1V437.0h1V436.8h1V438.4h1V426.9h1V437.4h1V437.8h1V437.8h1V433.9h1V432.3h1V424.1h1V435.1h1V427.2h1V435.5h1V434.7h1V479.4V527.3h-1V520.7h-1V522.8h-1V520.0h-1V532.7h-1V530.3h-1V520.4h-1V527.3h-1V525.0h-1V520.5h-1V525.2h-1V523.4h-1V530.8h-1V522.6h-1V524.8h-1V528.8h-1V525.0h-1V534.8h-1V522.0h-1V527.6h-1V527.7h-1V522.5h-1V527.3h-1V523.8h-1V532.3h-1V531.7h-1V525.4h-1V526.7h-1V527.1h-1V528.2h-1V528.8h-1V523.2h-1V525.0h-1V524.4h-1V524.5h-1V527.4h-1V527.5h-1V529.3h-1V531.5h-1V527.3h-1V523.7h-1V530.6h-1V529.5h-1V523.1h-1V533.5h-1V523.6h-1V527.9h-1V535.8h-1V529.3h-1V526.8h-1V537.3h-1V529.0h-1V536.1h-1V521.8h-1V529.3h-1V530.0h-1V534.4h-1V530.2h-1V526.3h-1V524.2h-1V520.6h-1V523.2h-1V521.1h-1V527.8h-1V533.8h-1V531.5h-1V528.5h-1V523.5h-1V520.3h-1V519.7h-1V520.1h-1V523.4h-1V521.1h-1V524.3h-1V530.7h-1V527.9h-1V534.0h-1V519.0h-1V527.5h-1V524.3h-1V519.6h-1V531.8h-1V526.3h-1V524.2h-1V520.1h-1V521.7h-1V526.9h-1V525.1h-1V519.9h-1V526.0h-1V523.5h-1V527.4h-1V533.3h-1V526.2h-1V523.5h-1V523.6h-1V529.4h-1V525.3h-1V528.9h-1V526.2h-1V533.2h-1V531.1h-1V533.8h-1V523.4h-1V531.0h-1V522.5h-1V526.6h-1V522.6h-1V531.6h-1V532.2h-1V531.3h-1V525.8h-1V522.8h-1V532.9h-1V525.7h-1V534.8h-1V524.7h-1V534.9h-1V531.1h-1V530.2h-1V523.0h-1V524.3h-1V525.0h-1V527.6h-1V542.8h-1V529.9h-1V534.5h-1V529.1h-1V527.6h-1V528.4h-1V525.0h-1V527.9h-1V524.6h-1V533.0h-1V529.3h-1V524.3h-1V530.3h-1V522.0h-1V529.4h-1V531.4h-1V522.8h-1V526.3h-1V521.9h-1V523.1h-1V530.8h-1V531.1h-1V534.8h-1V523.2h-1V520.7h-1V520.8h-1V530.0h-1V526.0h-1V537.3h-1V524.4h-1V537.0h-1V534.0h-1V527.9h-1V528.6h-1V521.2h-1V521.6h-1V530.1h-1V532.4h-1V522.6h-1V523.3h-1V520.1h-1V524.9h-1V519.9h-1V524.6h-1V519.4h-1V528.2h-1V519.0h-1V520.2h-1V519.0h-1V534.9h-1V529.8h-1V519.8h-1V519.8h-1V526.0h-1V523.0h-1V534.1h-1V530.4h-1V533.2h-1V522.8h-1V524.6h-1V533.8h-1V533.1h-1V533.4h-1V523.9h-1V521.5h-1V533.8h-1V528.1h-1V526.0h-1V524.9h-1V537.7h-1V527.2h-1V530.3h-1V531.9h-1V522.4h-1V523.3h-1V524.7h-1V527.7h-1V523.5h-1V529.9h-1V534.7h-1V529.1h-1V529.4h-1V525.5h-1V523.8h-1V527.5h-1V539.6h-1V526.8h-1V536.6h-1V532.0h-1V524.6h-1V528.2h-1V523.1h-1V529.6h-1V527.9h-1V533.0h-1V530.6h-1V522.6h-1V537.8h-1V523.1h-1V525.2h-1V532.5h-1V524.0h-1V523.9h-1V522.2h-1V522.1h-1V524.1h-1V533.7h-1V532.9h-1V529.8h-1V527.9h-1V534.1h-1V521.0h-1V522.5h-1V522.9h-1V529.8h-1V527.4h-1V527.3h-1V525.7h-1V520.7h-1V531.7h-1V521.2h-1V525.9h-1V544.4h-1V521.7h-1V528.6h-1V520.7h-1V522.4h-1V521.9h-1V529.0h-1V521.4h-1V524.7h-1V539.8h-1V528.9h-1V522.6h-1V537.3h-1V523.4h-1V528.3h-1V522.0h-1V534.5h-1V522.9h-1V529.8h-1V520.6h-1V530.0h-1V523.0h-1V523.9h-1V525.7h-1V521.0h-1V520.2h-1V535.8h-1V520.6h-1V524.5h-1V520.9h-1V521.8h-1V528.2h-1V526.3h-1V522.3h-1V532.4h-1V527.3h-1V522.0h-1V526.6h-1V534.0h-1V543.2h-1V525.3h-1V522.5h-1V530.8h-1V525.4h-1V534.8h-1V523.1h-1V531.9h-1V534.0h-1V528.3h-1V527.9h-1V524.3h-1V523.1h-1V529.9h-1V528.0h-1V531.4h-1V536.3h-1V528.4h-1V538.4h-1V523.3h-1V530.3h-1V524.2h-1V537.4h-1V528.6h-1V528.5h-1V530.6h-1V529.8h-1V523.4h-1V527.0h-1V529.2h-1V524.9h-1V522.7h-1V522.1h-1V527.4h-1V524.9h-1V539.1h-1V531.5h-1V525.5h-1V523.3h-1V522.4h-1V521.9h-1V525.7h-1V520.4h-1V525.6h-1V521.9h-1V519.9h-1V521.2h-1V527.2h-1V521.1h-1V525.1h-1V522.2h-1V519.9h-1V536.7h-1V521.8h-1V523.3h-1V530.2h-1V532.1h-1V525.7h-1V523.5h-1V527.0h-1V524.3h-1V528.2h-1V538.1h-1V527.8h-1V527.5h-1V519.9h-1V533.7h-1V519.7h-1V526.1h-1V520.8h-1V525.3h-1V526.0h-1V534.6h-1V537.7h-1V520.4h-1V525.7h-1V532.4h-1V529.8h-1V530.3h-1V522.7h-1V528.4h-1V531.6h-1V536.7h-1V532.3h-1V524.4h-1V527.1h-1V524.4h-1V535.1h-1V529.5h-1V529.3h-1V535.7h-1V526.9h-1V536.2h-1V527.1h-1V524.7h-1V526.8h-1Z" fill="#1e90ff" shape-rendering="crispEdges"/><path d="M770.2 414.0V479.4 M933.3 413.5V479.4 M988.4 414.0V479.4 M746.0 424.0V479.4 M774.5 423.0V479.4 M913.0 424.0V479.4 M785.5 479.4V545.0 M870.7 479.4V546.0 M936.8 479.4V546.5 M887.0 479.4V551.0" stroke="#1e90ff" stroke-width="1" fill="none"/><path d="M705.5 483.0V548.0 M734.5 424.0V470.0 M738.0 428.0V462.0 M747.5 420.0V468.0 M769.5 415.0V466.0 M776.0 418.0V445.0 M799.5 432.0V476.0 M762.0 430.0V452.0 M735.0 483.0V540.0 M738.5 483.0V520.0 M771.0 483.0V535.0 M787.0 484.0V548.0 M797.0 489.0V540.0 M844.0 483.0V540.0 M858.0 436.0V480.0 M863.5 436.0V452.0 M874.5 430.0V470.0 M908.0 425.0V470.0 M932.5 418.0V468.0 M940.0 420.0V462.0 M958.5 426.0V478.0 M975.0 428.0V470.0 M988.0 420.0V476.0 M1002.0 430.0V478.0 M1021.5 430.0V470.0 M1040.0 428.0V478.0 M1057.0 430.0V476.0 M1068.0 432.0V470.0 M915.0 483.0V540.0 M951.0 483.0V536.0 M967.0 483.0V546.0 M995.0 483.0V540.0 M1019.0 483.0V548.0 M1046.0 483.0V540.0 M1064.0 483.0V546.0 M822.0 430.0V466.0 M827.0 483.0V538.0 M1010.0 436.0V460.0 M895.0 436.0V470.0" stroke="#8cc4fb" stroke-width="0.9" fill="none"/><path d="M697.0 479.4H1082.0" stroke="#808080" stroke-width="2.2"/><path d="M887.2 395.0V564.5" stroke="#444" stroke-width="1.8"/><path d="M887.2 441.4V515.4" stroke="#808080" stroke-width="2.4"/><rect x="697.0" y="395.0" width="385.0" height="169.5" fill="none" stroke="#333" stroke-width="1.5"/><path d="M688.0 407.7H697.0 M688.0 431.6H697.0 M688.0 455.5H697.0 M688.0 479.4H697.0 M688.0 503.3H697.0 M688.0 527.2H697.0 M688.0 551.1H697.0 M697.3 564.5V573.0 M721.1 564.5V573.0 M744.8 564.5V573.0 M768.6 564.5V573.0 M792.4 564.5V573.0 M816.2 564.5V573.0 M839.9 564.5V573.0 M863.7 564.5V573.0 M887.5 564.5V573.0 M911.3 564.5V573.0 M935.0 564.5V573.0 M958.8 564.5V573.0 M982.6 564.5V573.0 M1006.4 564.5V573.0 M1030.1 564.5V573.0 M1053.9 564.5V573.0 M1077.7 564.5V573.0" stroke="#2a2a2a" stroke-width="1.6" fill="none"/><text x="686.5" y="436.8" font-size="14.2" fill="#222" text-anchor="end">10</text><text x="686.5" y="484.6" font-size="14.2" fill="#222" text-anchor="end">0</text><text x="686.5" y="532.4" font-size="14.2" fill="#222" text-anchor="end">-10</text><text x="696.8" y="588" font-size="14.2" fill="#222" text-anchor="middle">0</text><text x="791.9" y="588" font-size="14.2" fill="#222" text-anchor="middle">2</text><text x="887.0" y="588" font-size="14.2" fill="#222" text-anchor="middle">4</text><text x="982.1" y="588" font-size="14.2" fill="#222" text-anchor="middle">6</text><text x="1077.2" y="588" font-size="14.2" fill="#222" text-anchor="middle">8</text><text x="888" y="605.5" font-size="14.6" fill="#222" text-anchor="middle">Seconds</text><text transform="translate(652.5 480) rotate(-90)" font-size="14.6" fill="#222" text-anchor="middle">µV</text><text x="747.5" y="420.0" font-size="16.2" fill="#e8262e">#8</text><text x="774.0" y="418.0" font-size="16.2" fill="#e8262e">#3</text><text x="910.5" y="418.5" font-size="16.2" fill="#e8262e">#7</text><text x="936.5" y="417.0" font-size="16.2" fill="#e8262e">#1</text><text x="979.0" y="431.0" font-size="16.2" fill="#e8262e">#6</text><text x="771.0" y="538.0" font-size="16.2" fill="#e8262e">#10</text><text x="861.0" y="538.0" font-size="16.2" fill="#e8262e">#5</text><text x="886.3" y="550.3" font-size="16.2" fill="#e8262e">#9</text><text x="927.3" y="540.5" font-size="16.2" fill="#e8262e">#2</text><text x="950.8" y="552.5" font-size="16.2" fill="#e8262e">#4</text><circle cx="770.2" cy="413.0" r="1.6" fill="#e8262e"/><circle cx="933.3" cy="412.6" r="1.6" fill="#e8262e"/><circle cx="988.4" cy="413.0" r="1.6" fill="#e8262e"/><circle cx="785.5" cy="545.0" r="1.6" fill="#e8262e"/><circle cx="870.7" cy="546.5" r="1.6" fill="#e8262e"/><circle cx="936.8" cy="547.0" r="1.6" fill="#e8262e"/><circle cx="887" cy="546" r="1.6" fill="#3cc9a0"/></svg>
<div class="r" style="left:1130.00px;top:352.00px;width:465.00px;height:260.00px;background:#fff;box-shadow:2.5px 2.5px 2.5px rgba(0,0,0,0.36);"></div>
<span class="t " style="left:1273.50px;top:348.83px;font-size:13.20px;letter-spacing:-0.334px;font-weight:bold;color:#111;">DYNAMIC SPECTRUM</span>
<svg class="r" style="left:1571.5px;top:352.0px" width="10" height="9" viewBox="0 0 10 9"><rect x="1" y="1.6" width="7.6" height="5.8" rx="1" fill="#fff" stroke="#111" stroke-width="1.3"/><path d="M1 2h7.6" stroke="#111" stroke-width="2"/></svg>
<span class="t " style="left:1207.00px;top:371.83px;font-size:13.20px;letter-spacing:0.472px;color:#222;">Onsite/Pump Room/Circulatin Pump 3/Pump/DE</span>
<svg class="r" style="left:0;top:0" width="2013" height="1079" viewBox="0 0 2013 1079" font-family="Liberation Sans"><rect x="1180.0" y="395.0" width="385.0" height="27.0" fill="#f7f7f7"/><rect x="1180.0" y="457.5" width="385.0" height="35.5" fill="#f7f7f7"/><rect x="1180.0" y="528.5" width="385.0" height="35.5" fill="#f7f7f7"/><path d="M1319.0 395.0V564.5 M1458.2 395.0V564.5 M1180.0 528.5H1565.0 M1180.0 493.0H1565.0 M1180.0 457.5H1565.0 M1180.0 422.0H1565.0" stroke="#c4c4c4" stroke-width="1" stroke-dasharray="4 3" fill="none"/><path d="M1180.5 564.0V550.8h1V556.1h1V550.1h1V558.1h1V537.7h1V522.1h1V557.9h1V556.8h1V549.1h1V551.3h1V554.7h1V539.1h1V547.2h1V554.1h1V549.2h1V558.5h1V537.7h1V558.2h1V556.7h1V527.3h1V548.6h1V551.4h1V558.4h1V558.3h1V541.2h1V532.3h1V543.6h1V553.6h1V558.3h1V549.6h1V557.4h1V554.7h1V531.5h1V532.4h1V557.3h1V553.6h1V554.1h1V546.2h1V519.3h1V551.3h1V557.9h1V547.7h1V556.0h1V557.3h1V553.6h1V554.9h1V550.3h1V557.7h1V550.7h1V547.1h1V554.7h1V548.9h1V546.1h1V554.5h1V557.1h1V557.4h1V557.1h1V553.8h1V557.4h1V543.9h1V547.0h1V554.0h1V542.7h1V556.4h1V554.9h1V557.0h1V554.5h1V554.1h1V553.2h1V545.4h1V544.8h1V556.9h1V549.6h1V557.3h1V528.0h1V536.6h1V550.2h1V552.5h1V553.5h1V555.5h1V554.0h1V553.8h1V550.6h1V554.6h1V556.5h1V556.9h1V551.1h1V551.5h1V552.6h1V528.7h1V553.1h1V557.5h1V557.0h1V554.0h1V558.5h1V557.9h1V557.8h1V556.1h1V550.5h1V555.5h1V557.1h1V554.4h1V555.6h1V555.8h1V555.4h1V554.9h1V556.1h1V548.9h1V555.4h1V557.5h1V555.2h1V555.1h1V549.7h1V558.0h1V552.4h1V556.9h1V558.3h1V557.7h1V551.0h1V557.3h1V553.0h1V556.8h1V554.4h1V552.4h1V557.1h1V544.5h1V557.9h1V556.0h1V556.9h1V553.9h1V552.9h1V554.0h1V552.6h1V555.8h1V552.2h1V552.2h1V553.3h1V553.5h1V556.9h1V556.3h1V554.4h1V553.5h1V547.4h1V557.1h1V554.7h1V550.5h1V554.7h1V556.3h1V557.5h1V544.8h1V556.6h1V554.9h1V555.3h1V554.1h1V554.5h1V548.4h1V555.8h1V556.9h1V557.6h1V552.1h1V554.9h1V557.1h1V556.0h1V556.7h1V552.7h1V557.6h1V534.8h1V558.4h1V551.9h1V553.8h1V557.9h1V557.0h1V548.7h1V555.8h1V555.1h1V555.1h1V554.6h1V557.9h1V556.4h1V550.7h1V557.5h1V551.7h1V557.0h1V557.1h1V555.1h1V558.3h1V554.5h1V556.8h1V556.9h1V555.9h1V549.9h1V556.9h1V557.7h1V551.1h1V556.9h1V554.9h1V549.1h1V558.4h1V558.0h1V555.0h1V551.5h1V554.7h1V558.2h1V557.7h1V548.5h1V552.2h1V558.2h1V553.2h1V544.9h1V557.6h1V556.2h1V557.4h1V551.1h1V546.9h1V548.3h1V554.3h1V556.2h1V554.0h1V557.9h1V558.1h1V556.4h1V554.0h1V557.6h1V539.5h1V556.3h1V551.8h1V553.5h1V555.1h1V557.3h1V555.2h1V557.1h1V550.4h1V553.5h1V553.7h1V543.7h1V554.5h1V554.3h1V558.2h1V557.3h1V547.7h1V554.1h1V551.6h1V549.5h1V558.5h1V557.2h1V558.3h1V549.2h1V552.1h1V554.6h1V555.7h1V542.1h1V557.7h1V531.5h1V549.8h1V544.5h1V554.4h1V554.9h1V523.5h1V551.7h1V554.8h1V556.5h1V549.5h1V547.0h1V545.3h1V558.3h1V552.2h1V540.6h1V525.1h1V552.0h1V555.4h1V543.8h1V556.3h1V547.0h1V536.7h1V536.7h1V541.8h1V555.1h1V552.5h1V548.9h1V553.2h1V548.7h1V528.3h1V556.6h1V549.9h1V555.3h1V551.0h1V558.4h1V554.4h1V541.7h1V552.0h1V532.6h1V548.3h1V554.9h1V551.4h1V554.2h1V557.9h1V532.2h1V556.4h1V558.0h1V554.2h1V556.3h1V552.9h1V553.3h1V548.4h1V504.7h1V546.7h1V549.0h1V554.4h1V522.1h1V536.4h1V556.3h1V523.6h1V519.2h1V550.0h1V539.9h1V548.0h1V556.0h1V551.2h1V541.0h1V550.9h1V552.8h1V552.1h1V554.6h1V547.6h1V512.1h1V548.6h1V558.1h1V556.6h1V537.1h1V548.9h1V548.1h1V546.1h1V522.5h1V502.0h1V513.8h1V553.1h1V557.7h1V549.5h1V553.6h1V549.2h1V553.3h1V539.2h1V549.7h1V543.2h1V541.2h1V543.9h1V554.5h1V542.8h1V549.5h1V546.7h1V555.5h1V553.2h1V555.4h1V522.8h1V531.6h1V552.9h1V543.6h1V541.9h1V543.1h1V546.7h1V551.4h1V545.1h1V554.3h1V549.1h1V551.4h1V554.3h1V502.7h1V557.8h1V550.2h1V551.2h1V540.8h1V557.7h1V547.4h1V546.9h1V555.6h1V554.1h1V551.1h1V550.6h1V516.4h1V504.0h1V532.0h1V544.7h1V550.1h1V552.6h1V564.0Z" fill="#2c96ff" shape-rendering="crispEdges"/><path d="M1183.2 466.9V564.0 M1188.0 432.7V564.0 M1197.4 431.4V564.0 M1205.5 415.8V564.0 M1210.6 490.0V564.0 M1200.6 504.0V564.0 M1218.7 506.7V564.0 M1223.0 514.7V564.0 M1214.6 533.0V564.0 M1236.4 478.7V564.0 M1241.0 517.4V564.0 M1245.8 473.6V564.0 M1250.4 513.4V564.0 M1253.9 504.0V564.0 M1259.0 535.0V564.0 M1263.3 497.3V564.0 M1285.9 511.2V564.0 M1227.5 536.0V564.0 M1267.5 536.0V564.0 M1378.0 485.2V564.0 M1386.1 529.0V564.0 M1391.0 526.8V564.0 M1404.1 526.8V564.0 M1418.4 492.4V564.0 M1426.0 535.0V564.0 M1431.0 514.7V564.0 M1436.4 524.0V564.0 M1444.0 493.0V564.0 M1448.5 535.0V564.0 M1453.3 476.3V564.0 M1457.4 479.0V564.0 M1462.0 494.6V564.0 M1470.8 519.6V564.0 M1474.8 510.0V564.0 M1484.2 446.7V564.0 M1488.8 517.4V564.0 M1494.2 521.5V564.0 M1497.2 470.4V564.0 M1501.7 500.8V564.0 M1504.3 501.5V564.0 M1507.9 487.8V564.0 M1510.3 512.0V564.0 M1515.2 500.8V564.0 M1517.8 509.5V564.0 M1521.8 506.7V564.0 M1525.4 481.9V564.0 M1530.5 513.4V564.0 M1538.5 491.3V564.0 M1543.4 509.4V564.0 M1548.0 504.0V564.0 M1552.0 525.5V564.0 M1556.0 528.0V564.0 M1560.9 525.0V564.0 M1355.0 540.0V564.0 M1348.0 547.0V564.0 M1370.0 541.0V564.0 M1308.0 545.0V564.0 M1311.0 542.0V564.0 M1338.0 548.0V564.0 M1342.0 544.0V564.0" stroke="#3494f6" stroke-width="1.2" fill="none"/><rect x="1180.0" y="395.0" width="385.0" height="169.5" fill="none" stroke="#333" stroke-width="1.5"/><path d="M1170.0 564.0H1180.0 M1173.0 556.9H1180.0 M1173.0 549.8H1180.0 M1173.0 542.7H1180.0 M1173.0 535.6H1180.0 M1170.0 528.5H1180.0 M1173.0 521.4H1180.0 M1173.0 514.3H1180.0 M1173.0 507.2H1180.0 M1173.0 500.1H1180.0 M1170.0 493.0H1180.0 M1173.0 485.9H1180.0 M1173.0 478.8H1180.0 M1173.0 471.7H1180.0 M1173.0 464.6H1180.0 M1170.0 457.5H1180.0 M1173.0 450.4H1180.0 M1173.0 443.3H1180.0 M1173.0 436.2H1180.0 M1173.0 429.1H1180.0 M1170.0 422.0H1180.0 M1173.0 414.9H1180.0 M1173.0 407.8H1180.0 M1173.0 400.7H1180.0 M1180.0 564.5V573.5 M1207.8 564.5V572.5 M1235.7 564.5V572.5 M1263.5 564.5V572.5 M1291.3 564.5V572.5 M1319.2 564.5V573.5 M1347.0 564.5V572.5 M1374.8 564.5V572.5 M1402.6 564.5V572.5 M1430.5 564.5V572.5 M1458.3 564.5V573.5 M1486.1 564.5V572.5 M1514.0 564.5V572.5 M1541.8 564.5V572.5" stroke="#2a2a2a" stroke-width="1.5" fill="none"/><text x="1169" y="569.2" font-size="14.2" fill="#222" text-anchor="end">0</text><text x="1169" y="533.7" font-size="14.2" fill="#222" text-anchor="end">0.5</text><text x="1169" y="498.2" font-size="14.2" fill="#222" text-anchor="end">1.0</text><text x="1169" y="462.7" font-size="14.2" fill="#222" text-anchor="end">1.5</text><text x="1169" y="427.2" font-size="14.2" fill="#222" text-anchor="end">2.0</text><text x="1180.0" y="588" font-size="14.2" fill="#222" text-anchor="middle">0</text><text x="1319.0" y="588" font-size="14.2" fill="#222" text-anchor="middle">50000</text><text x="1458.2" y="588" font-size="14.2" fill="#222" text-anchor="middle">100000</text><text x="1371" y="605.5" font-size="14.6" fill="#222" text-anchor="middle">cpm</text><text transform="translate(1136.5 490) rotate(-90)" font-size="14.4" fill="#222" text-anchor="middle">µV² (env. PSP)</text><text x="1208.7" y="420.6" font-size="16.2" fill="#e8262e">#1</text><text x="1187.2" y="449.0" font-size="16.2" fill="#e8262e">#2</text><text x="1186.4" y="471.7" font-size="16.2" fill="#e8262e">#5</text><text x="1210.0" y="471.7" font-size="16.2" fill="#e8262e">#3</text><text x="1236.0" y="467.0" font-size="16.2" fill="#e8262e">#7</text><text x="1227.0" y="495.5" font-size="16.2" fill="#e8262e">#9</text><text x="1444.0" y="469.6" font-size="16.2" fill="#e8262e">#8</text><text x="1442.6" y="495.5" font-size="16.2" fill="#e8262e">#10</text><text x="1474.8" y="440.0" font-size="16.2" fill="#e8262e">#4</text><text x="1487.5" y="463.1" font-size="16.2" fill="#e8262e">#6</text><circle cx="1205.5" cy="415.8" r="1.6" fill="#e8262e"/><circle cx="1188.0" cy="432.7" r="1.6" fill="#e8262e"/><circle cx="1197.4" cy="431.4" r="1.6" fill="#e8262e"/><circle cx="1183.2" cy="466.9" r="1.6" fill="#e8262e"/><circle cx="1245.8" cy="473.6" r="1.6" fill="#e8262e"/><circle cx="1236.4" cy="478.7" r="1.6" fill="#e8262e"/><circle cx="1453.3" cy="476.3" r="1.6" fill="#e8262e"/><circle cx="1457.4" cy="479.0" r="1.6" fill="#e8262e"/><circle cx="1484.2" cy="446.7" r="1.6" fill="#e8262e"/><circle cx="1497.2" cy="470.4" r="1.6" fill="#e8262e"/></svg>
<!-- p3_right -->
<div class="r" style="left:1607.00px;top:55.00px;width:3.30px;height:572.00px;background:#8a8a8a;"></div>
<div class="r" style="left:1610.20px;top:55.00px;width:404.00px;height:28.00px;background:#e9edf7;border:2px solid #4b74cf;border-radius:4px 0 0 4px;border-right:none"></div>
<svg class="r" style="left:1965.5px;top:60.0px" width="45" height="18" viewBox="0 0 45 18"><path d="M5.5 7.3h10l-5 5z" fill="#111"/><path d="M28.8 3.6L37.6 12.2 M37.6 3.6L28.8 12.2" stroke="#111" stroke-width="2.3" fill="none"/></svg>
<div class="r" style="left:1610.20px;top:83.50px;width:404.00px;height:541.00px;background:#fff;border-left:1.5px solid #5a7fd0;border-bottom:1.5px solid #6f8fd0;border-top:1px solid #b9c6e6;border-radius:4px 0 0 0"></div>
<div class="r" style="left:1611.00px;top:623.20px;width:402.00px;height:1.60px;background:#7386bd;"></div>
<span class="t " style="left:1621.50px;top:94.26px;font-size:13.40px;letter-spacing:-0.371px;color:#2a2ad8;text-decoration:underline;text-decoration-thickness:1.1px;text-underline-offset:1.6px;text-decoration-skip-ink:none;-webkit-text-stroke:0.15px #2a2ad8;">Onsite</span>
<span class="t " style="left:1673.50px;top:92.66px;font-size:16.00px;letter-spacing:-0.844px;color:#8a8a8a;">&gt;&gt;</span>
<span class="t " style="left:1705.00px;top:94.26px;font-size:13.40px;letter-spacing:-0.886px;color:#2a2ad8;text-decoration:underline;text-decoration-thickness:1.1px;text-underline-offset:1.6px;text-decoration-skip-ink:none;-webkit-text-stroke:0.15px #2a2ad8;">Pump Room</span>
<span class="t " style="left:1787.00px;top:92.66px;font-size:16.00px;letter-spacing:-0.844px;color:#8a8a8a;">&gt;&gt;</span>
<span class="t " style="left:1818.60px;top:94.26px;font-size:13.40px;letter-spacing:-0.521px;color:#2a2ad8;text-decoration:underline;text-decoration-thickness:1.1px;text-underline-offset:1.6px;text-decoration-skip-ink:none;-webkit-text-stroke:0.15px #2a2ad8;">Circulatin Pump 3</span>
<span class="t " style="left:1931.00px;top:92.66px;font-size:16.00px;letter-spacing:-0.844px;color:#8a8a8a;">&gt;&gt;</span>
<span class="t " style="left:1962.50px;top:94.26px;font-size:13.40px;letter-spacing:-1.002px;color:#2a2ad8;text-decoration:underline;text-decoration-thickness:1.1px;text-underline-offset:1.6px;text-decoration-skip-ink:none;-webkit-text-stroke:0.15px #2a2ad8;">Pump</span>
<span class="t " style="left:1622.00px;top:114.26px;font-size:16.00px;letter-spacing:-0.844px;color:#8a8a8a;">&gt;&gt;</span>
<span class="t " style="left:1654.00px;top:115.86px;font-size:13.40px;letter-spacing:-1.308px;color:#2a2ad8;text-decoration:underline;text-decoration-thickness:1.1px;text-underline-offset:1.6px;text-decoration-skip-ink:none;-webkit-text-stroke:0.15px #2a2ad8;">DE</span>
<span class="t " style="left:1685.00px;top:114.26px;font-size:16.00px;letter-spacing:-0.844px;color:#8a8a8a;">&gt;&gt;</span>
<span class="t " style="left:1717.00px;top:115.86px;font-size:13.40px;letter-spacing:-0.512px;color:#2a2ad8;text-decoration:underline;text-decoration-thickness:1.1px;text-underline-offset:1.6px;text-decoration-skip-ink:none;-webkit-text-stroke:0.15px #2a2ad8;">RS2T(Ht-32k)</span>
<span class="t " style="left:1621.50px;top:609.26px;font-size:13.40px;letter-spacing:-0.281px;color:#2a2ad8;text-decoration:underline;text-decoration-thickness:1.1px;text-underline-offset:1.6px;text-decoration-skip-ink:none;-webkit-text-stroke:0.15px #2a2ad8;">Go to parent [DE]</span>
<!-- p4_bottom -->
<div class="r" style="left:602.50px;top:624.00px;width:1411.00px;height:3.70px;background:#8a8a8a;"></div>
<div class="r" style="left:603.00px;top:627.70px;width:1410.00px;height:27.50px;background:linear-gradient(#f0f2f8,#e9eefa);border-bottom:2px solid #929292;border-radius:4px 0 0 0"></div>
<svg class="r" style="left:1965.5px;top:632.2px" width="45" height="18" viewBox="0 0 45 18"><path d="M5.5 7.3h10l-5 5z" fill="#111"/><path d="M28.8 3.6L37.6 12.2 M37.6 3.6L28.8 12.2" stroke="#111" stroke-width="2.3" fill="none"/></svg>
<div class="r" style="left:603.00px;top:655.00px;width:1410.00px;height:384.50px;background:#fff;"></div>
<div class="r" style="left:622.00px;top:676.50px;width:118.50px;height:32.00px;background:linear-gradient(#fbfbfb,#ebebeb);border:1.5px solid #222"></div>
<span class="t " style="left:639.80px;top:685.58px;font-size:14.20px;letter-spacing:-0.126px;font-weight:bold;color:#111;">Selected</span>
<svg class="r" style="left:718px;top:686px" width="11" height="13" viewBox="0 0 11 13"><path d="M2 5.5L5.4 2.3L8.8 5.5 M2 10.5L5.4 7.3L8.8 10.5" stroke="#111" stroke-width="1.7" fill="none"/></svg>
<div class="r" style="left:622.00px;top:708.50px;width:118.50px;height:117.00px;background:#fff;border:1px solid #ececec;border-top:none"></div>
<div class="r" style="left:648.30px;top:729.30px;width:15.40px;height:11.80px;border-radius:50%;background:radial-gradient(ellipse at 50% 35%,#6db3e6,#3f93d4)"></div>
<span class="t " style="left:679.00px;top:729.20px;font-size:13.00px;color:#222;">0</span>
<div class="r" style="left:648.30px;top:761.50px;width:15.40px;height:11.80px;border-radius:50%;background:radial-gradient(ellipse at 50% 35%,#fbb75c,#f09433)"></div>
<span class="t " style="left:679.00px;top:761.40px;font-size:13.00px;color:#222;">0</span>
<div class="r" style="left:648.30px;top:793.50px;width:15.40px;height:11.80px;border-radius:50%;background:radial-gradient(ellipse at 50% 35%,#f07a5e,#e0503c)"></div>
<span class="t " style="left:679.00px;top:793.40px;font-size:13.00px;color:#222;">0</span>
<div class="r" style="left:758.00px;top:658.50px;width:230.00px;height:379.50px;background:#2f5bbf;border:1px solid #2450b0"></div>
<div class="r" style="left:759.50px;top:660.00px;width:227.00px;height:31.00px;background:linear-gradient(#bccbec,#9bb1e2 42%,#4f78cf 50%,#2d5bc1 80%,#2450b0)"></div>
<span class="t " style="left:766.50px;top:666.46px;font-size:18.60px;letter-spacing:0.622px;font-weight:bold;color:#fff;text-shadow:0.5px 1px 1px rgba(20,40,110,0.6);">Alarms</span>
<div class="r" style="left:759.50px;top:691.00px;width:227.00px;height:151.00px;background:#fff;"></div>
<svg class="r" style="left:773px;top:696px" width="42" height="36" viewBox="0 0 42 36"><path d="M20.3 3.5L37.6 33.2H3z" fill="#fff" stroke="#1d7fc4" stroke-width="2.6" stroke-linejoin="miter"/><path d="M20.3 13v11" stroke="#1d7fc4" stroke-width="2.6"/><circle cx="20.3" cy="28.3" r="1.7" fill="#1d7fc4"/></svg>
<svg class="r" style="left:776.8px;top:741.0px" width="40" height="40" viewBox="0 0 40 40"><defs><linearGradient id="bg741" x1="0" y1="0" x2="0" y2="1"><stop offset="0" stop-color="#3f9ee4"/><stop offset="1" stop-color="#0f6bb3"/></linearGradient></defs><path d="M16.5 0.8c1.4 0 2.4 1 2.4 2.3v0.8c5 1.3 7.6 5.6 7.6 11v6.5c0 3.2 2.6 5.6 6.2 8.4v1.6H0.5v-1.6c3.6-2.8 6.2-5.2 6.2-8.4v-6.5c0-5.4 2.6-9.7 7.4-11v-0.8c0-1.3 1-2.3 2.4-2.3z" fill="url(#bg741)"/><ellipse cx="16.5" cy="35.3" rx="3" ry="2.2" fill="#0f6bb3"/></svg>
<svg class="r" style="left:776.8px;top:787.0px" width="40" height="40" viewBox="0 0 40 40"><defs><linearGradient id="bg787" x1="0" y1="0" x2="0" y2="1"><stop offset="0" stop-color="#3f9ee4"/><stop offset="1" stop-color="#0f6bb3"/></linearGradient></defs><path d="M16.5 0.8c1.4 0 2.4 1 2.4 2.3v0.8c5 1.3 7.6 5.6 7.6 11v6.5c0 3.2 2.6 5.6 6.2 8.4v1.6H0.5v-1.6c3.6-2.8 6.2-5.2 6.2-8.4v-6.5c0-5.4 2.6-9.7 7.4-11v-0.8c0-1.3 1-2.3 2.4-2.3z" fill="url(#bg787)"/><ellipse cx="16.5" cy="35.3" rx="3" ry="2.2" fill="#0f6bb3"/><path d="M30.5 4v9M26 8.5h9" stroke="#1272b8" stroke-width="2"/></svg>
<div class="r" style="left:760px;top:833px;width:226px;height:9px;overflow:hidden"><svg class="r" style="left:16.8px;top:0.5px" width="40" height="40" viewBox="0 0 40 40"><defs><linearGradient id="bgx" x1="0" y1="0" x2="0" y2="1"><stop offset="0" stop-color="#3f9ee4"/><stop offset="1" stop-color="#0f6bb3"/></linearGradient></defs><path d="M16.5 0.8c1.4 0 2.4 1 2.4 2.3v0.8c5 1.3 7.6 5.6 7.6 11v6.5c0 3.2 2.6 5.6 6.2 8.4v1.6H0.5v-1.6c3.6-2.8 6.2-5.2 6.2-8.4v-6.5c0-5.4 2.6-9.7 7.4-11v-0.8c0-1.3 1-2.3 2.4-2.3z" fill="url(#bgx)"/><ellipse cx="16.5" cy="35.3" rx="3" ry="2.2" fill="#0f6bb3"/><path d="M25.5 0l9 9M34.5 0l-9 9" stroke="#e02a3a" stroke-width="1.8"/></svg></div>
<span class="t ts" style="left:819.50px;top:707.43px;font-size:13.20px;letter-spacing:0.064px;color:#222;">Points in Alarm</span>
<span class="t ts" style="left:819.50px;top:753.63px;font-size:13.20px;letter-spacing:0.136px;color:#222;">Attach with existing</span>
<span class="t ts" style="left:819.50px;top:799.43px;font-size:13.20px;letter-spacing:0.037px;color:#222;">Attach with new</span>
<div class="r" style="left:967.30px;top:821.20px;width:18.00px;height:19.00px;background:linear-gradient(#eef2fa,#cfd9ee);border:1px solid #e6ebf5"></div>
<svg class="r" style="left:971px;top:828px" width="11" height="7" viewBox="0 0 11 7"><path d="M1 1h9L5.5 5.8z" fill="#111"/></svg>
<div class="r" style="left:759.50px;top:842.00px;width:227.00px;height:7.50px;background:#2d5bc1;"></div>
<svg class="r" style="left:852px;top:843px" width="44" height="4" viewBox="0 0 44 4"><rect x="2.0" y="0.5" width="2.3" height="2" fill="#e8eefb" transform="skewX(-20)"/><rect x="6.6" y="0.5" width="2.3" height="2" fill="#e8eefb" transform="skewX(-20)"/><rect x="11.2" y="0.5" width="2.3" height="2" fill="#e8eefb" transform="skewX(-20)"/><rect x="15.8" y="0.5" width="2.3" height="2" fill="#e8eefb" transform="skewX(-20)"/><rect x="20.4" y="0.5" width="2.3" height="2" fill="#e8eefb" transform="skewX(-20)"/><rect x="25.0" y="0.5" width="2.3" height="2" fill="#e8eefb" transform="skewX(-20)"/><rect x="29.6" y="0.5" width="2.3" height="2" fill="#e8eefb" transform="skewX(-20)"/><rect x="34.2" y="0.5" width="2.3" height="2" fill="#e8eefb" transform="skewX(-20)"/><rect x="38.8" y="0.5" width="2.3" height="2" fill="#e8eefb" transform="skewX(-20)"/></svg>
<div class="r" style="left:759.00px;top:849.50px;width:228.00px;height:32.50px;background:linear-gradient(#eaf1fc,#cedcf5 44%,#a2bcea 50%,#b3c9ef 85%,#c0d3f2);border-top:1px solid #fff;"></div><span class="t " style="left:765.30px;top:860.29px;font-size:13.60px;letter-spacing:-0.018px;font-weight:bold;color:#111;">Selection</span>
<div class="r" style="left:759.00px;top:883.50px;width:228.00px;height:31.50px;background:linear-gradient(#fff1d2,#fddba4 44%,#f7b352 50%,#f6a93c 82%,#ec9a2e);border-top:1px solid #fff;"></div><span class="t " style="left:765.30px;top:893.09px;font-size:13.60px;letter-spacing:0.098px;font-weight:bold;color:#111;">Alarms</span>
<div class="r" style="left:759.00px;top:916.50px;width:228.00px;height:32.00px;background:linear-gradient(#eaf1fc,#cedcf5 44%,#a2bcea 50%,#b3c9ef 85%,#c0d3f2);border-top:1px solid #fff;"></div><span class="t " style="left:765.30px;top:926.19px;font-size:13.60px;letter-spacing:0.240px;font-weight:bold;color:#111;">Work Orders/Surveys</span>
<div class="r" style="left:759.00px;top:950.00px;width:228.00px;height:31.50px;background:linear-gradient(#eaf1fc,#cedcf5 44%,#a2bcea 50%,#b3c9ef 85%,#c0d3f2);border-top:1px solid #fff;"></div><span class="t " style="left:765.30px;top:958.99px;font-size:13.60px;letter-spacing:0.093px;font-weight:bold;color:#111;">Settings</span>
<div class="r" style="left:759.50px;top:983.00px;width:227.00px;height:53.50px;background:linear-gradient(#c3d7f6,#a5c0ec 60%,#8fb0e6);border-top:1px solid #dfe9fb"></div>
<svg class="r" style="left:970px;top:1000px" width="12" height="18" viewBox="0 0 12 18"><path d="M1.5 2.2L4.5 5L1.5 7.8 M5.8 2.2L8.8 5L5.8 7.8" stroke="#111" stroke-width="1.5" fill="none"/><path d="M2.8 12.6h5.6L5.6 15.6z" fill="#111"/></svg>
<div class="r" style="left:989.50px;top:655.00px;width:1023.50px;height:31.50px;background:#f0f0f0;border-radius:0 4px 0 0"></div>
<div class="r" style="left:2008.50px;top:686.00px;width:4.50px;height:352.00px;background:#f0f0f0;"></div>
<div class="r" style="left:989.50px;top:1033.50px;width:1023.50px;height:5.00px;background:#f0f0f0;"></div>
<div class="r" style="left:989.50px;top:686.00px;width:1019.50px;height:348.00px;background:#fff;border:1px solid #e0e0e0;border-left:none"></div>
<div class="r" style="left:989.50px;top:659.70px;width:70.50px;height:27.00px;background:#fff;border:1px solid #e8e8e8;border-bottom:none"></div>
<div class="r" style="left:1060.00px;top:662.00px;width:52.50px;height:24.00px;background:#f5f5f5;border:1px solid #e3e3e3;border-bottom:none"></div>
<div class="r" style="left:1112.50px;top:662.00px;width:52.50px;height:24.00px;background:#f5f5f5;border:1px solid #e3e3e3;border-bottom:none;border-left:none"></div>
<span class="t ts" style="left:998.60px;top:664.63px;font-size:13.20px;letter-spacing:-0.447px;color:#222;">Readings</span>
<span class="t ts" style="left:1067.10px;top:667.13px;font-size:13.20px;letter-spacing:-0.345px;color:#222;">Alarms</span>
<span class="t ts" style="left:1120.30px;top:667.13px;font-size:13.20px;letter-spacing:-0.392px;color:#222;">Events</span>
<svg class="r" style="left:995px;top:693px" width="20" height="14" viewBox="0 0 20 14"><rect x="1.8" y="1.8" width="9" height="9.4" rx="1" fill="#fff" stroke="#8e8e8e"/><path d="M4 6.5h4.6" stroke="#444" stroke-width="1.3"/><path d="M12 6.5h6" stroke="#b0b0b0" stroke-dasharray="1 1"/></svg>
<div class="r" style="left:1013.20px;top:688.00px;width:20.50px;height:20.50px;background:linear-gradient(#f8f8f8,#e9e9e9);border-bottom:2px solid #9bb0aa;border-right:1px solid #cdd5d2;"></div>
<div class="r" style="left:1034.00px;top:687.50px;width:972.00px;height:21.50px;border:1px dotted #d0d0d0;border-left:none"></div>
<span class="t ts" style="left:1038.00px;top:690.03px;font-size:13.20px;letter-spacing:-0.050px;color:#222;">Onsite/Pump Room/Circulatin Pump 3/Pump/DE/RS2T(Ht-32k)</span>
<div class="r" style="left:1024.00px;top:709.00px;width:1.00px;height:130.00px;border-left:1px dotted #b8b8b8"></div>
<div class="r" style="left:1035.50px;top:716.00px;width:972.50px;height:28.50px;background:linear-gradient(#fcfcfc,#ececec);border-bottom:2px solid #9fb4ae;border-top:1px solid #f0f0f0"></div>
<div class="r" style="left:1162.70px;top:716.00px;width:2.00px;height:28.00px;background:linear-gradient(90deg,#8aa39c,#cfdad6)"></div>
<div class="r" style="left:1265.30px;top:716.00px;width:2.00px;height:28.00px;background:linear-gradient(90deg,#8aa39c,#cfdad6)"></div>
<div class="r" style="left:1378.20px;top:716.00px;width:2.00px;height:28.00px;background:linear-gradient(90deg,#8aa39c,#cfdad6)"></div>
<div class="r" style="left:1470.50px;top:716.00px;width:2.00px;height:28.00px;background:linear-gradient(90deg,#8aa39c,#cfdad6)"></div>
<div class="r" style="left:1588.00px;top:716.00px;width:2.00px;height:28.00px;background:linear-gradient(90deg,#8aa39c,#cfdad6)"></div>
<div class="r" style="left:1683.50px;top:716.00px;width:2.00px;height:28.00px;background:linear-gradient(90deg,#8aa39c,#cfdad6)"></div>
<div class="r" style="left:1796.80px;top:716.00px;width:2.00px;height:28.00px;background:linear-gradient(90deg,#8aa39c,#cfdad6)"></div>
<div class="r" style="left:1896.00px;top:716.00px;width:2.00px;height:28.00px;background:linear-gradient(90deg,#8aa39c,#cfdad6)"></div>
<div class="r" style="left:2006.00px;top:716.00px;width:2.00px;height:28.00px;background:linear-gradient(90deg,#8aa39c,#cfdad6)"></div>
<span class="t ts" style="left:1086.41px;top:722.63px;font-size:13.20px;letter-spacing:-0.587px;color:#222;">RMS</span>
<span class="t ts" style="left:1189.37px;top:722.63px;font-size:13.20px;letter-spacing:-0.497px;color:#222;">Max RMS</span>
<span class="t ts" style="left:1309.66px;top:722.63px;font-size:13.20px;letter-spacing:-0.451px;color:#222;">Peak</span>
<span class="t ts" style="left:1392.77px;top:722.63px;font-size:13.20px;letter-spacing:-0.363px;color:#222;">Crest Factor</span>
<span class="t ts" style="left:1490.91px;top:722.63px;font-size:13.20px;letter-spacing:-0.400px;color:#222;">Sampling Rate</span>
<span class="t ts" style="left:1625.20px;top:722.63px;font-size:13.20px;letter-spacing:-0.418px;color:#222;">Date</span>
<span class="t ts" style="left:1728.34px;top:722.63px;font-size:13.20px;letter-spacing:-0.433px;color:#222;">Time</span>
<span class="t ts" style="left:1812.08px;top:722.63px;font-size:13.20px;letter-spacing:-0.378px;color:#222;">Length (Sec)</span>
<span class="t ts" style="left:1928.82px;top:722.63px;font-size:13.20px;letter-spacing:-0.391px;color:#222;">Operator</span>
<div class="r" style="left:1025.00px;top:755.50px;width:11.00px;height:1.00px;border-top:1px dotted #b8b8b8"></div>
<div class="r" style="left:1035.50px;top:745.50px;width:21.00px;height:20.20px;background:linear-gradient(#f8f8f8,#e9e9e9);border-bottom:2px solid #9bb0aa;border-right:1px solid #cdd5d2;"></div>
<div class="r" style="left:1056.50px;top:766.00px;width:950.50px;height:1.00px;border-top:1px dotted #cfcfcf"></div>
<span class="t ts" style="left:1062.90px;top:746.43px;font-size:13.20px;letter-spacing:-0.450px;color:#2e8b2e;">10.4</span>
<span class="t ts" style="left:1170.30px;top:746.43px;font-size:13.20px;letter-spacing:-0.462px;color:#222;">10.51</span>
<span class="t ts" style="left:1272.50px;top:746.43px;font-size:13.20px;letter-spacing:-0.449px;color:#222;">23.11</span>
<span class="t ts" style="left:1385.30px;top:746.43px;font-size:13.20px;letter-spacing:-0.450px;color:#222;">4.32</span>
<span class="t ts" style="left:1476.70px;top:746.43px;font-size:13.20px;letter-spacing:-0.514px;color:#222;">32000</span>
<span class="t ts" style="left:1594.70px;top:746.43px;font-size:13.20px;letter-spacing:-0.473px;color:#222;">2025-03-05</span>
<span class="t ts" style="left:1690.60px;top:746.43px;font-size:13.20px;letter-spacing:-0.488px;color:#222;">10:36 AM</span>
<span class="t ts" style="left:1804.00px;top:746.43px;font-size:13.20px;color:#222;">8</span>
<span class="t ts" style="left:1903.50px;top:746.43px;font-size:13.20px;letter-spacing:-0.396px;color:#222;">default</span>
<div class="r" style="left:1025.00px;top:776.70px;width:11.00px;height:1.00px;border-top:1px dotted #b8b8b8"></div>
<div class="r" style="left:1035.50px;top:766.70px;width:21.00px;height:20.20px;background:linear-gradient(#f8f8f8,#e9e9e9);border-bottom:2px solid #9bb0aa;border-right:1px solid #cdd5d2;"></div>
<div class="r" style="left:1056.50px;top:787.20px;width:950.50px;height:1.00px;border-top:1px dotted #cfcfcf"></div>
<span class="t ts" style="left:1062.90px;top:767.63px;font-size:13.20px;letter-spacing:-0.462px;color:#2e8b2e;">24.88</span>
<span class="t ts" style="left:1170.30px;top:767.63px;font-size:13.20px;letter-spacing:-0.462px;color:#222;">25.08</span>
<span class="t ts" style="left:1272.50px;top:767.63px;font-size:13.20px;letter-spacing:-0.462px;color:#222;">37.74</span>
<span class="t ts" style="left:1385.30px;top:767.63px;font-size:13.20px;letter-spacing:-0.428px;color:#222;">4.4</span>
<span class="t ts" style="left:1476.70px;top:767.63px;font-size:13.20px;letter-spacing:-0.514px;color:#222;">32000</span>
<span class="t ts" style="left:1594.70px;top:767.63px;font-size:13.20px;letter-spacing:-0.473px;color:#222;">2024-10-08</span>
<span class="t ts" style="left:1690.60px;top:767.63px;font-size:13.20px;letter-spacing:-0.484px;color:#222;">9:24 AM</span>
<span class="t ts" style="left:1804.00px;top:767.63px;font-size:13.20px;color:#222;">8</span>
<span class="t ts" style="left:1903.50px;top:767.63px;font-size:13.20px;letter-spacing:-0.396px;color:#222;">default</span>
<div class="r" style="left:1025.00px;top:797.90px;width:11.00px;height:1.00px;border-top:1px dotted #b8b8b8"></div>
<div class="r" style="left:1035.50px;top:787.90px;width:21.00px;height:20.20px;background:linear-gradient(#f8f8f8,#e9e9e9);border-bottom:2px solid #9bb0aa;border-right:1px solid #cdd5d2;"></div>
<div class="r" style="left:1056.50px;top:808.40px;width:950.50px;height:1.00px;border-top:1px dotted #cfcfcf"></div>
<span class="t ts" style="left:1062.90px;top:788.83px;font-size:13.20px;letter-spacing:-0.462px;color:#2e8b2e;">24.54</span>
<span class="t ts" style="left:1170.30px;top:788.83px;font-size:13.20px;letter-spacing:-0.462px;color:#222;">24.86</span>
<span class="t ts" style="left:1272.50px;top:788.83px;font-size:13.20px;letter-spacing:-0.462px;color:#222;">38.14</span>
<span class="t ts" style="left:1385.30px;top:788.83px;font-size:13.20px;letter-spacing:-0.450px;color:#222;">4.79</span>
<span class="t ts" style="left:1476.70px;top:788.83px;font-size:13.20px;letter-spacing:-0.514px;color:#222;">32000</span>
<span class="t ts" style="left:1594.70px;top:788.83px;font-size:13.20px;letter-spacing:-0.473px;color:#222;">2024-07-23</span>
<span class="t ts" style="left:1690.60px;top:788.83px;font-size:13.20px;letter-spacing:-0.484px;color:#222;">9:09 AM</span>
<span class="t ts" style="left:1804.00px;top:788.83px;font-size:13.20px;color:#222;">8</span>
<span class="t ts" style="left:1903.50px;top:788.83px;font-size:13.20px;letter-spacing:-0.396px;color:#222;">default</span>
<div class="r" style="left:1025.00px;top:819.10px;width:11.00px;height:1.00px;border-top:1px dotted #b8b8b8"></div>
<div class="r" style="left:1035.50px;top:809.10px;width:21.00px;height:20.20px;background:linear-gradient(#f8f8f8,#e9e9e9);border-bottom:2px solid #9bb0aa;border-right:1px solid #cdd5d2;"></div>
<div class="r" style="left:1056.50px;top:829.60px;width:950.50px;height:1.00px;border-top:1px dotted #cfcfcf"></div>
<span class="t ts" style="left:1062.90px;top:810.03px;font-size:13.20px;letter-spacing:-0.462px;color:#2e8b2e;">22.82</span>
<span class="t ts" style="left:1170.30px;top:810.03px;font-size:13.20px;letter-spacing:-0.462px;color:#222;">23.14</span>
<span class="t ts" style="left:1272.50px;top:810.03px;font-size:13.20px;letter-spacing:-0.462px;color:#222;">36.28</span>
<span class="t ts" style="left:1385.30px;top:810.03px;font-size:13.20px;letter-spacing:-0.450px;color:#222;">4.71</span>
<span class="t ts" style="left:1476.70px;top:810.03px;font-size:13.20px;letter-spacing:-0.514px;color:#222;">32000</span>
<span class="t ts" style="left:1594.70px;top:810.03px;font-size:13.20px;letter-spacing:-0.473px;color:#222;">2024-04-09</span>
<span class="t ts" style="left:1690.60px;top:810.03px;font-size:13.20px;letter-spacing:-0.484px;color:#222;">8:41 AM</span>
<span class="t ts" style="left:1804.00px;top:810.03px;font-size:13.20px;color:#222;">8</span>
<span class="t ts" style="left:1903.50px;top:810.03px;font-size:13.20px;letter-spacing:-0.396px;color:#222;">default</span>
<div class="r" style="left:1025.00px;top:840.30px;width:11.00px;height:1.00px;border-top:1px dotted #b8b8b8"></div>
<div class="r" style="left:1035.50px;top:830.30px;width:21.00px;height:20.20px;background:linear-gradient(#f8f8f8,#e9e9e9);border-bottom:2px solid #9bb0aa;border-right:1px solid #cdd5d2;"></div>
<div class="r" style="left:1056.50px;top:850.80px;width:950.50px;height:1.00px;border-top:1px dotted #cfcfcf"></div>
<span class="t ts" style="left:1062.90px;top:831.23px;font-size:13.20px;letter-spacing:-0.462px;color:#2e8b2e;">27.94</span>
<span class="t ts" style="left:1170.30px;top:831.23px;font-size:13.20px;letter-spacing:-0.462px;color:#222;">28.38</span>
<span class="t ts" style="left:1272.50px;top:831.23px;font-size:13.20px;letter-spacing:-0.462px;color:#222;">41.66</span>
<span class="t ts" style="left:1385.30px;top:831.23px;font-size:13.20px;letter-spacing:-0.450px;color:#222;">4.85</span>
<span class="t ts" style="left:1476.70px;top:831.23px;font-size:13.20px;letter-spacing:-0.514px;color:#222;">32000</span>
<span class="t ts" style="left:1594.70px;top:831.23px;font-size:13.20px;letter-spacing:-0.466px;color:#222;">2023-11-28</span>
<span class="t ts" style="left:1690.60px;top:831.23px;font-size:13.20px;letter-spacing:-0.475px;color:#222;">9:11 AM</span>
<span class="t ts" style="left:1804.00px;top:831.23px;font-size:13.20px;color:#222;">8</span>
<span class="t ts" style="left:1903.50px;top:831.23px;font-size:13.20px;letter-spacing:-0.396px;color:#222;">default</span>
<div class="r" style="left:1163.70px;top:745.00px;width:1.00px;height:106.00px;border-left:1px dotted #cfcfcf"></div>
<div class="r" style="left:1266.30px;top:745.00px;width:1.00px;height:106.00px;border-left:1px dotted #cfcfcf"></div>
<div class="r" style="left:1379.20px;top:745.00px;width:1.00px;height:106.00px;border-left:1px dotted #cfcfcf"></div>
<div class="r" style="left:1471.50px;top:745.00px;width:1.00px;height:106.00px;border-left:1px dotted #cfcfcf"></div>
<div class="r" style="left:1589.00px;top:745.00px;width:1.00px;height:106.00px;border-left:1px dotted #cfcfcf"></div>
<div class="r" style="left:1684.50px;top:745.00px;width:1.00px;height:106.00px;border-left:1px dotted #cfcfcf"></div>
<div class="r" style="left:1797.80px;top:745.00px;width:1.00px;height:106.00px;border-left:1px dotted #cfcfcf"></div>
<div class="r" style="left:1897.00px;top:745.00px;width:1.00px;height:106.00px;border-left:1px dotted #cfcfcf"></div>
<div class="r" style="left:2007.00px;top:745.00px;width:1.00px;height:106.00px;border-left:1px dotted #cfcfcf"></div>
<!-- p5_status -->
<div class="r" style="left:0.00px;top:1038.60px;width:2013.00px;height:40.40px;background:#f0f0f0;border-top:1.4px solid #8c8c8c"></div>
<div class="r" style="left:1010.80px;top:1041.00px;width:1.00px;height:38.00px;background:#dcdcdc;"></div>
<div class="r" style="left:1131.40px;top:1041.00px;width:1.00px;height:38.00px;background:#dcdcdc;"></div>
<div class="r" style="left:1370.00px;top:1041.00px;width:1.00px;height:38.00px;background:#dcdcdc;"></div>
<div class="r" style="left:1688.00px;top:1041.00px;width:1.00px;height:38.00px;background:#dcdcdc;"></div>
<div class="r" style="left:1817.90px;top:1041.00px;width:1.00px;height:38.00px;background:#dcdcdc;"></div>
<div class="r" style="left:1902.00px;top:1041.00px;width:1.00px;height:38.00px;background:#dcdcdc;"></div>
<div class="r" style="left:1952.30px;top:1041.00px;width:1.00px;height:38.00px;background:#dcdcdc;"></div>
<span class="t " style="left:1138.00px;top:1053.13px;font-size:13.20px;letter-spacing:0.326px;color:#2a3f6a;text-decoration:underline;text-underline-offset:1.5px;">takumistamping</span>
<span class="t ts" style="left:1435.50px;top:1053.13px;font-size:13.20px;letter-spacing:0.155px;color:#2f8f3a;">Database server:</span>
<span class="t ts" style="left:1545.50px;top:1053.13px;font-size:13.20px;letter-spacing:0.074px;color:#2f8f3a;">localhost 13.1</span>
<span class="t ts" style="left:1694.50px;top:1053.13px;font-size:13.20px;letter-spacing:-0.157px;color:#222;">January 26, 2026</span>
<span class="t ts" style="left:1825.00px;top:1053.13px;font-size:13.20px;letter-spacing:-0.380px;color:#222;">3:27 PM</span>
<span class="t ts" style="left:1909.50px;top:1053.13px;font-size:13.20px;letter-spacing:-0.187px;color:#222;">NUM</span>
</body></html>
